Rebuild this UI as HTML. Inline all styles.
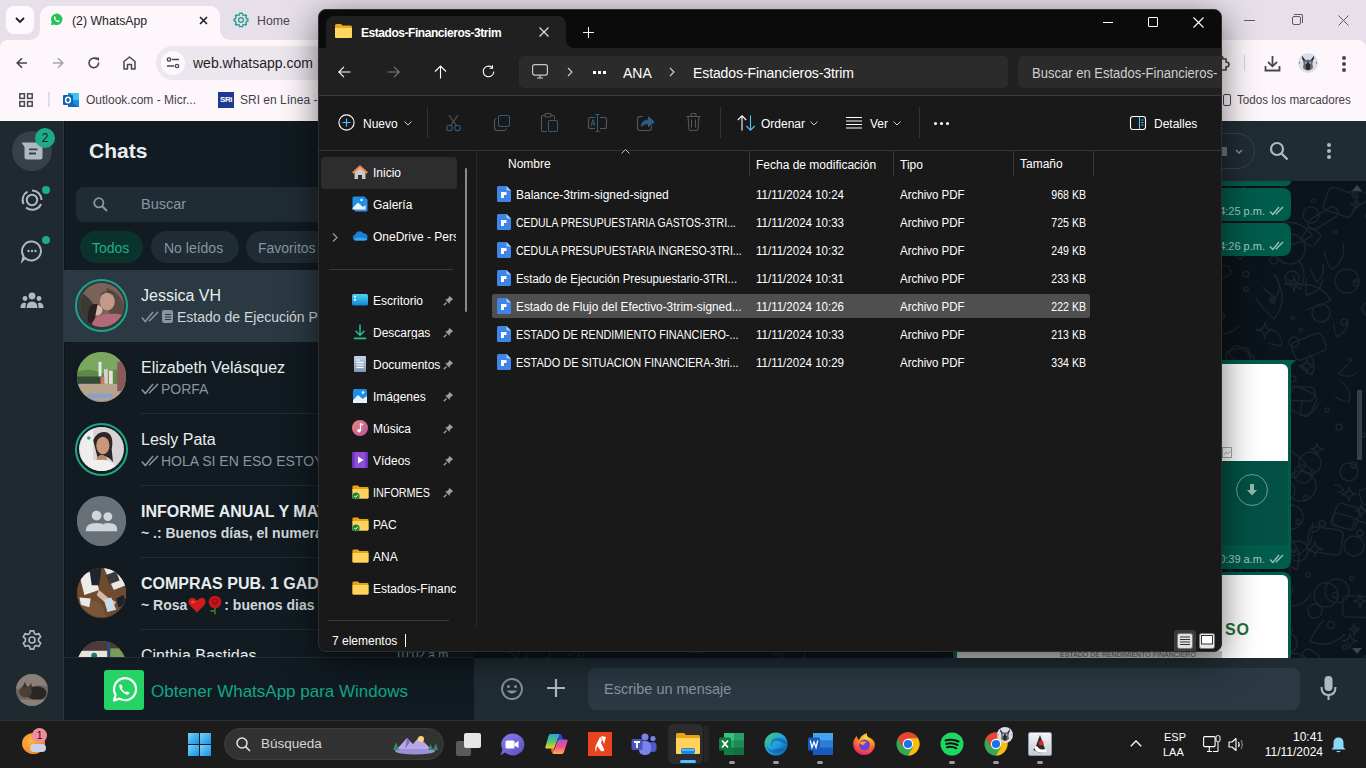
<!DOCTYPE html>
<html><head><meta charset="utf-8">
<style>
*{margin:0;padding:0;box-sizing:border-box}
html,body{width:1366px;height:768px;overflow:hidden;background:#111b21;font-family:"Liberation Sans",sans-serif}
.a{position:absolute}
.t{position:absolute;white-space:nowrap;line-height:1}
svg{position:absolute;overflow:visible}
</style></head><body>

<!-- ============ CHROME TOP ============ -->
<div class="a" id="chrome" style="left:0;top:0;width:1366px;height:121px;background:#e7e0eb">
  <!-- tab strip -->
  <div class="a" style="left:40px;top:6px;width:180px;height:40px;border-radius:10px 10px 0 0;background:#fdf7fc"></div>
  <div class="a" style="left:30px;top:30px;width:10px;height:10px;background:#fdf7fc"></div>
  <div class="a" style="left:30px;top:30px;width:10px;height:10px;border-radius:0 0 10px 0;background:#e7e0eb"></div>
  <div class="a" style="left:220px;top:30px;width:10px;height:10px;background:#fdf7fc"></div>
  <div class="a" style="left:220px;top:30px;width:10px;height:10px;border-radius:0 0 0 10px;background:#e7e0eb"></div>
  <div class="a" style="left:6px;top:6px;width:28px;height:28px;border-radius:8px;background:#fdf8fd"></div>
  <svg style="left:14px;top:15px" width="12" height="10"><path d="M2 3 L6 7 L10 3" stroke="#1f1f1f" stroke-width="1.8" fill="none"/></svg>
  <!-- whatsapp favicon -->
  <svg style="left:50px;top:13px" width="13" height="13" viewBox="0 0 24 24"><path d="M1.5 22.5 L3 16.8 A10.6 10.6 0 1 1 7.2 21 Z" fill="#25c15a"/><path d="M8.3 6.2 Q6.6 7.5 7.4 10.2 Q9 14.5 13.6 16.6 Q16.6 17.6 17.6 15.6 L17.4 14.5 L15 13.3 L14 14.5 Q11.2 13.4 9.6 10.6 L10.6 9.2 L9.6 6.4 Z" fill="#fff"/></svg>
  <div class="t" style="left:72px;top:15px;font-size:12.3px;color:#1f1f1f">(2) WhatsApp</div>
  <svg style="left:199px;top:16px" width="9" height="9"><path d="M1 1 L8 8 M8 1 L1 8" stroke="#1f1f1f" stroke-width="1.6"/></svg>
  <!-- Home tab gear -->
  <svg style="left:233px;top:12px" width="16" height="16" viewBox="0 0 16 16"><path d="M8 1.2 L9.4 1.4 L9.8 3 L11.2 3.6 L12.6 2.8 L13.6 3.8 L12.9 5.2 L13.4 6.6 L14.9 7 L14.9 9 L13.4 9.4 L12.9 10.8 L13.6 12.2 L12.6 13.2 L11.2 12.5 L9.8 13 L9.4 14.6 L6.6 14.6 L6.2 13 L4.8 12.5 L3.4 13.2 L2.4 12.2 L3.1 10.8 L2.6 9.4 L1.1 9 L1.1 7 L2.6 6.6 L3.1 5.2 L2.4 3.8 L3.4 2.8 L4.8 3.6 L6.2 3 L6.6 1.4 Z" fill="none" stroke="#1b9c8c" stroke-width="1.3"/><circle cx="8" cy="8" r="2.4" fill="none" stroke="#1b9c8c" stroke-width="1.2"/></svg>
  <div class="t" style="left:257px;top:15px;font-size:12.3px;color:#4a4650">Home</div>
  <!-- window controls -->
  <div class="a" style="left:1244px;top:20px;width:11px;height:1px;background:#5d5a63"></div>
  <div class="a" style="left:1292px;top:16px;width:9px;height:9px;border:1px solid #5d5a63;border-radius:2px"></div>
  <div class="a" style="left:1294px;top:14px;width:9px;height:9px;border-top:1px solid #5d5a63;border-right:1px solid #5d5a63;border-radius:0 2px 0 0"></div>
  <svg style="left:1338px;top:15px" width="11" height="11"><path d="M0.5 0.5 L10.5 10.5 M10.5 0.5 L0.5 10.5" stroke="#5d5a63" stroke-width="1"/></svg>

  <!-- toolbar -->
  <div class="a" style="left:0;top:40px;width:1366px;height:81px;border-radius:8px 8px 0 0;background:#fdf7fc"></div>
  <svg style="left:16px;top:57px" width="12" height="12"><path d="M11 6 H1.5 M6 1.2 L1.2 6 L6 10.8" stroke="#474551" stroke-width="1.6" fill="none"/></svg>
  <svg style="left:52px;top:57px" width="12" height="12"><path d="M1 6 H10.5 M6 1.2 L10.8 6 L6 10.8" stroke="#a9a6ae" stroke-width="1.6" fill="none"/></svg>
  <svg style="left:88px;top:57px" width="12" height="12"><path d="M10.6 5.5 A4.8 4.8 0 1 1 9 2.3" stroke="#474551" stroke-width="1.6" fill="none"/><path d="M7.2 0.6 L11 0.6 L11 4.2 Z" fill="#474551"/></svg>
  <svg style="left:123px;top:56px" width="13" height="14"><path d="M1 13 V5.5 L6.5 1 L12 5.5 V13 H8.5 V8.5 H4.5 V13 Z" stroke="#474551" stroke-width="1.5" fill="none" stroke-linejoin="round"/></svg>
  <div class="a" style="left:156px;top:46px;width:1054px;height:34px;border-radius:17px;background:#ece6ee"></div>
  <div class="a" style="left:161px;top:51px;width:24px;height:24px;border-radius:12px;background:#fdf8fd"></div>
  <svg style="left:166px;top:57px" width="14" height="12"><circle cx="3" cy="2.5" r="1.7" stroke="#474551" stroke-width="1.3" fill="none"/><path d="M6 2.5 H13 M1 9 H8" stroke="#474551" stroke-width="1.3"/><circle cx="11" cy="9" r="1.7" stroke="#474551" stroke-width="1.3" fill="none"/></svg>
  <div class="t" style="left:193px;top:56px;font-size:14px;color:#1f1f1f">web.whatsapp.com</div>
  <!-- right toolbar -->
  <svg style="left:1212px;top:54px" width="18" height="18" viewBox="0 0 18 18"><path d="M2 5 H6 Q6 2 8.5 2 Q11 2 11 5 H14 V8 Q17 8 17 10.5 Q17 13 14 13 V16 H2 Z" stroke="#474551" stroke-width="1.6" fill="none"/></svg>
  <div class="a" style="left:1244px;top:55px;width:1px;height:16px;background:#d9cdf0"></div>
  <svg style="left:1264px;top:55px" width="17" height="17"><path d="M8.5 1 V11 M4 7 L8.5 11.3 L13 7" stroke="#474551" stroke-width="1.8" fill="none"/><path d="M1.5 11 V15.5 H15.5 V11" stroke="#474551" stroke-width="1.8" fill="none"/></svg>
  <svg style="left:1298px;top:53px" width="20" height="20" viewBox="0 0 100 100"><defs><clipPath id="pug1"><circle cx="50" cy="50" r="50"/></clipPath></defs><g clip-path="url(#pug1)"><rect width="100" height="100" fill="#dcdce4"/><path d="M20 15 L42 40 L30 55Z M80 15 L58 40 L70 55Z" fill="#1f3f8f"/><path d="M18 12 L30 30 L24 35Z M82 12 L70 30 L76 35Z" fill="#111"/><path d="M30 40 Q50 25 70 40 L75 75 Q50 100 25 75Z" fill="#6a6a70"/><path d="M38 50 Q50 42 62 50 L60 80 Q50 90 40 80Z" fill="#2a2a30"/><circle cx="40" cy="50" r="4" fill="#eee"/><circle cx="60" cy="50" r="4" fill="#eee"/><rect x="5" y="45" width="4" height="8" fill="#c04040"/><rect x="91" y="45" width="4" height="8" fill="#c04040"/></g></svg>
  <div class="a" style="left:1342px;top:56px;width:4px;height:4px;border-radius:2px;background:#474551"></div>
  <div class="a" style="left:1342px;top:62px;width:4px;height:4px;border-radius:2px;background:#474551"></div>
  <div class="a" style="left:1342px;top:68px;width:4px;height:4px;border-radius:2px;background:#474551"></div>

  <!-- bookmarks -->
  <svg style="left:19px;top:93px" width="14" height="14"><rect x="0.8" y="0.8" width="4.6" height="4.6" stroke="#474551" stroke-width="1.5" fill="none"/><rect x="8.6" y="0.8" width="4.6" height="4.6" stroke="#474551" stroke-width="1.5" fill="none"/><rect x="0.8" y="8.6" width="4.6" height="4.6" stroke="#474551" stroke-width="1.5" fill="none"/><rect x="8.6" y="8.6" width="4.6" height="4.6" stroke="#474551" stroke-width="1.5" fill="none"/></svg>
  <div class="a" style="left:48px;top:92px;width:2px;height:15px;background:#e3d8f5"></div>
  <svg style="left:63px;top:92px" width="17" height="16"><rect x="5" y="1" width="11" height="14" fill="#1490df"/><rect x="8" y="1" width="8" height="7" fill="#50d9ff" opacity=".7"/><path d="M5 8 L16 15 H5 Z" fill="#0a6bbd"/><rect x="0" y="3" width="10" height="10" rx="1" fill="#0f5fb3"/><ellipse cx="5" cy="8" rx="2.4" ry="2.8" stroke="#fff" stroke-width="1.5" fill="none"/></svg>
  <div class="t" style="left:86px;top:94px;font-size:12px;color:#43404a">Outlook.com - Micr...</div>
  <div class="a" style="left:218px;top:92px;width:16px;height:16px;background:#1e3a8e"></div>
  <div class="t" style="left:218px;top:96px;width:16px;text-align:center;font-size:8px;font-weight:bold;color:#fff;letter-spacing:-0.5px">SRi</div>
  <div class="t" style="left:240px;top:94px;font-size:12px;color:#43404a">SRI en Línea - I</div>
  <div class="a" style="left:1223px;top:94px;width:8px;height:12px;border:1.5px solid #474551;border-radius:2px"></div>
  <div class="t" style="left:1237px;top:94px;font-size:12px;color:#43404a;transform:scaleX(0.97);transform-origin:0 0">Todos los marcadores</div>
</div>

<!-- ============ WHATSAPP ============ -->
<div class="a" id="wa" style="left:0;top:121px;width:1366px;height:599px;background:#0b141a;overflow:hidden">
 <div class="a" style="left:0;top:-121px;width:1366px;height:599px">
  <!-- nav rail -->
  <div class="a" style="left:0;top:121px;width:64px;height:599px;background:#1f2a30;border-right:1px solid #2b363d"></div>
  <div class="a" style="left:12px;top:131px;width:40px;height:40px;border-radius:50%;background:#374147"></div>
  <svg style="left:21px;top:142px" width="22" height="18" viewBox="0 0 22 18"><path d="M0.5 0.5 H21 Q21.5 0.5 21.5 1 V15 Q21.5 17.5 19 17.5 H6 Q3.5 17.5 3.5 15 V5 Z" fill="#aebac1"/><path d="M8 7.3 H16.5 M8 11.5 H15" stroke="#374147" stroke-width="1.8"/></svg>
  <div class="a" style="left:35px;top:128px;width:20px;height:20px;border-radius:50%;background:#1daa87"></div>
  <div class="t" style="left:35px;top:132px;width:20px;text-align:center;font-size:12px;color:#111b21">2</div>
  <svg style="left:20px;top:188px" width="24" height="24" viewBox="0 0 24 24"><circle cx="12" cy="12" r="5.2" stroke="#aebac1" stroke-width="2" fill="none"/><path d="M12 2.5 A9.5 9.5 0 0 1 21.5 12 M21 16 A9.5 9.5 0 0 1 6 19.5 M3.5 16 A9.5 9.5 0 0 1 7.5 3.6" stroke="#aebac1" stroke-width="2" fill="none"/></svg>
  <div class="a" style="left:42px;top:186px;width:8px;height:8px;border-radius:50%;background:#1daa87"></div>
  <svg style="left:20px;top:239px" width="24" height="24" viewBox="0 0 24 24"><path d="M12 2.5 A9.5 9.5 0 1 1 5 19 L2.5 21.5 L3.5 17 A9.5 9.5 0 0 1 12 2.5 Z" stroke="#aebac1" stroke-width="2" fill="none"/><circle cx="8.5" cy="12" r="1.2" fill="#aebac1"/><circle cx="12" cy="12" r="1.2" fill="#aebac1"/><circle cx="15.5" cy="12" r="1.2" fill="#aebac1"/></svg>
  <div class="a" style="left:42px;top:236px;width:8px;height:8px;border-radius:50%;background:#1daa87"></div>
  <svg style="left:20px;top:290px" width="24" height="22" viewBox="0 0 24 22"><circle cx="12" cy="6" r="3.4" fill="#aebac1"/><circle cx="5" cy="8.5" r="2.4" fill="#aebac1"/><circle cx="19" cy="8.5" r="2.4" fill="#aebac1"/><path d="M6.5 18 Q6.5 11.5 12 11.5 Q17.5 11.5 17.5 18 Z" fill="#aebac1"/><path d="M0.5 18 Q0.5 12.8 4.5 12.8 Q5.8 12.8 6.2 13.2 Q5.3 15 5.3 18 Z M23.5 18 Q23.5 12.8 19.5 12.8 Q18.2 12.8 17.8 13.2 Q18.7 15 18.7 18 Z" fill="#aebac1"/></svg>
  <svg style="left:21px;top:629px" width="22" height="22" viewBox="0 0 24 24"><path d="M10 2 H14 L14.6 5 L16.6 6.1 L19.5 5 L21.5 8.5 L19.2 10.5 V13.5 L21.5 15.5 L19.5 19 L16.6 17.9 L14.6 19 L14 22 H10 L9.4 19 L7.4 17.9 L4.5 19 L2.5 15.5 L4.8 13.5 V10.5 L2.5 8.5 L4.5 5 L7.4 6.1 L9.4 5 Z" stroke="#aebac1" stroke-width="1.8" fill="none" stroke-linejoin="round"/><circle cx="12" cy="12" r="3.3" stroke="#aebac1" stroke-width="1.8" fill="none"/></svg>
  <svg style="left:16px;top:674px" width="32" height="32" viewBox="0 0 100 100"><defs><clipPath id="c7"><circle cx="50" cy="50" r="50"/></clipPath></defs><g clip-path="url(#c7)"><rect width="100" height="100" fill="#6e6460"/><path d="M0 0 H100 V40 Q60 30 30 45 Q10 50 0 45Z" fill="#8a7e78"/><ellipse cx="65" cy="60" rx="30" ry="22" fill="#2a2624"/><ellipse cx="30" cy="55" rx="20" ry="18" fill="#4a4038"/><path d="M20 40 L28 25 L35 42Z M40 40 L48 28 L50 45Z" fill="#3a3430"/><rect x="0" y="80" width="100" height="20" fill="#8a8078"/></g></svg>

  <!-- chat list -->
  <div class="a" style="left:65px;top:121px;width:409px;height:599px;background:#111b21"></div>
  <div class="t" style="left:89px;top:140px;font-size:21px;font-weight:bold;color:#e9edef">Chats</div>
  <div class="a" style="left:76px;top:187px;width:398px;height:35px;border-radius:8px;background:#202c33"></div>
  <svg style="left:93px;top:197px" width="15" height="15" viewBox="0 0 15 15"><circle cx="5.8" cy="5.8" r="4.6" stroke="#8696a0" stroke-width="1.8" fill="none"/><path d="M9.2 9.2 L14 14" stroke="#8696a0" stroke-width="2"/></svg>
  <div class="t" style="left:141px;top:197px;font-size:14.5px;color:#8696a0">Buscar</div>
  <div class="a" style="left:80px;top:231px;width:63px;height:32px;border-radius:16px;background:#0a332c"></div>
  <div class="t" style="left:92px;top:241px;font-size:14px;color:#1fae85">Todos</div>
  <div class="a" style="left:151px;top:231px;width:88px;height:32px;border-radius:16px;background:#202c33"></div>
  <div class="t" style="left:164px;top:241px;font-size:14px;color:#8696a0">No leídos</div>
  <div class="a" style="left:246px;top:231px;width:84px;height:32px;border-radius:16px;background:#202c33"></div>
  <div class="t" style="left:258px;top:241px;font-size:14px;color:#8696a0">Favoritos</div>
<div class="a" style="left:64px;top:270px;width:410px;height:72px;background:#2a3942"></div>
<div class="a" style="left:74.5px;top:278.5px;width:53px;height:53px;border-radius:50%;border:2px solid #1fa586"></div>
<div class="a" style="left:79px;top:283px;width:44px;height:44px;border-radius:50%;background:radial-gradient(circle at 60% 35%,#c9a39a 0,#a0706a 25%,#5b4642 55%,#3a3532 80%)"></div>
<div class="t" style="left:141px;top:288px;font-size:16px;font-weight:normal;color:#e9edef">Jessica VH</div>
<svg style="left:141px;top:-1px;margin-top:312px" width="18" height="12" viewBox="0 0 18 12"><path d="M0.8 6.5 L4.3 10.5 L12 1 M8 10.3 L17 1" stroke="#8696a0" stroke-width="1.5" fill="none"/></svg>
<div class="a" style="left:162px;top:310px;width:11px;height:13px;border-radius:2px;background:#8696a0"></div>
<div class="a" style="left:164.5px;top:314px;width:6px;height:1.2px;background:#2a3942;box-shadow:0 2.5px 0 #2a3942,0 5px 0 #2a3942"></div>
<div class="t" style="left:177px;top:310px;font-size:14px;font-weight:normal;color:#d1d7db">Estado de Ejecución Presupuestario</div>
<div class="a" style="left:76.5px;top:352.5px;width:49px;height:49px;border-radius:50%;background:linear-gradient(180deg,#5f8a4a 0,#3f6a35 45%,#6d6a5d 60%,#c9b7a3 85%,#9a8e80 100%)"></div>
<div class="t" style="left:141px;top:360px;font-size:16px;font-weight:normal;color:#e9edef">Elizabeth Velásquez</div>
<svg style="left:141px;top:-1px;margin-top:384px" width="18" height="12" viewBox="0 0 18 12"><path d="M0.8 6.5 L4.3 10.5 L12 1 M8 10.3 L17 1" stroke="#8696a0" stroke-width="1.5" fill="none"/></svg>
<div class="t" style="left:161px;top:382px;font-size:14px;font-weight:normal;color:#8696a0">PORFA</div>
<div class="a" style="left:141px;top:413px;width:333px;height:1px;background:#222d34"></div>
<div class="a" style="left:74.5px;top:422.5px;width:53px;height:53px;border-radius:50%;border:2px solid #1fa586"></div>
<div class="a" style="left:79px;top:427px;width:44px;height:44px;border-radius:50%;background:radial-gradient(circle at 50% 45%,#b08770 0,#8c6e60 18%,#d8d4d2 45%,#ecebea 70%,#c8c4c4 100%)"></div>
<div class="t" style="left:141px;top:432px;font-size:16px;font-weight:normal;color:#e9edef">Lesly Pata</div>
<svg style="left:141px;top:-1px;margin-top:456px" width="18" height="12" viewBox="0 0 18 12"><path d="M0.8 6.5 L4.3 10.5 L12 1 M8 10.3 L17 1" stroke="#8696a0" stroke-width="1.5" fill="none"/></svg>
<div class="t" style="left:161px;top:454px;font-size:14px;font-weight:normal;color:#8696a0">HOLA SI EN ESO ESTOY TRABAJANDO</div>
<div class="a" style="left:141px;top:485px;width:333px;height:1px;background:#222d34"></div>
<div class="a" style="left:76.5px;top:496.5px;width:49px;height:49px;border-radius:50%;background:#687177"></div>
<div class="t" style="left:141px;top:504px;font-size:16px;font-weight:bold;color:#e9edef">INFORME ANUAL Y MATRIZ</div>
<div class="t" style="left:141px;top:526px;font-size:14px;font-weight:bold;color:#d1d7db">~ .: Buenos días, el numeral</div>
<div class="a" style="left:141px;top:557px;width:333px;height:1px;background:#222d34"></div>
<div class="a" style="left:76.5px;top:568.5px;width:49px;height:49px;border-radius:50%;background:radial-gradient(circle at 60% 40%,#e8e6e2 0,#b4a696 30%,#6a4a30 60%,#4a3422 100%)"></div>
<div class="t" style="left:141px;top:576px;font-size:16px;font-weight:bold;color:#e9edef">COMPRAS PUB. 1 GAD</div>
<div class="t" style="left:141px;top:598px;font-size:14px;font-weight:bold;color:#d1d7db">~ Rosa<span style="display:inline-block;width:37px"></span>: buenos dias p</div>
<div class="a" style="left:141px;top:629px;width:333px;height:1px;background:#222d34"></div>
<div class="a" style="left:76.5px;top:640.5px;width:49px;height:49px;border-radius:50%;background:linear-gradient(90deg,#8a6a3a 0,#c8a050 40%,#6a8a50 60%,#3a5a3a 100%)"></div>
<div class="t" style="left:141px;top:648px;font-size:16px;font-weight:normal;color:#e9edef">Cinthia Bastidas</div>
<div class="t" style="left:141px;top:670px;font-size:14px;font-weight:normal;color:#8696a0"></div>


  <svg style="left:79.5px;top:282.5px" width="44" height="44" viewBox="0 0 100 100"><defs><clipPath id="c1"><circle cx="50" cy="50" r="50"/></clipPath></defs><g clip-path="url(#c1)"><rect width="100" height="100" fill="#7a625a"/><path d="M0 20 Q20 30 35 55 L30 100 H0Z" fill="#3b3a32"/><path d="M60 10 Q90 20 100 50 V100 H70Z" fill="#5a4a42"/><ellipse cx="62" cy="42" rx="17" ry="20" fill="#c29a8a"/><path d="M45 30 Q60 10 80 28 Q75 20 62 18 Q48 20 45 30Z" fill="#2a221e"/><ellipse cx="38" cy="62" rx="13" ry="12" fill="#d8b4ac"/><path d="M20 60 Q25 45 40 48 L30 100 H15Z" fill="#2a2020"/><path d="M25 100 Q30 75 50 72 Q70 68 100 72 V100Z" fill="#b06a7a"/></g></svg>
  <svg style="left:77.0px;top:352.0px" width="49.0" height="49.0" viewBox="0 0 100 100"><defs><clipPath id="c2"><circle cx="50" cy="50" r="50"/></clipPath></defs><g clip-path="url(#c2)"><rect width="100" height="100" fill="#5d8a48"/><path d="M0 0 H100 V40 Q70 30 50 45 Q30 30 0 40Z" fill="#7aa860"/><rect x="44" y="20" width="6" height="35" fill="#e0ecef"/><rect x="0" y="50" width="60" height="15" fill="#3a4a38"/><rect x="55" y="35" width="8" height="30" fill="#d8d0cc"/><rect x="65" y="38" width="8" height="30" fill="#e8e0d8"/><rect x="48" y="50" width="8" height="20" fill="#c87a5a"/><rect x="0" y="65" width="100" height="35" fill="#b8a48a"/><path d="M20 85 H75 L70 95 H25Z" fill="#8aa0c8"/><rect x="82" y="20" width="18" height="60" fill="#8a5a5a"/></g></svg>
  <svg style="left:79.5px;top:426.5px" width="44" height="44" viewBox="0 0 100 100"><defs><clipPath id="c3"><circle cx="50" cy="50" r="50"/></clipPath></defs><g clip-path="url(#c3)"><rect width="100" height="100" fill="#d8d4d4"/><rect x="0" y="0" width="30" height="100" fill="#eeeeee"/><path d="M30 30 Q40 8 60 12 Q78 18 72 50 L75 80 Q60 60 40 70 Z" fill="#2e2624"/><ellipse cx="52" cy="42" rx="15" ry="20" fill="#c8987c"/><path d="M38 70 Q50 55 62 72 L58 82 Q48 78 38 82Z" fill="#b8866a"/><path d="M10 100 Q20 70 45 75 Q70 70 90 100Z" fill="#f2f0ee"/><circle cx="20" cy="25" r="4" fill="#2aa090"/></g></svg>
  <svg style="left:77.0px;top:496.0px" width="49.0" height="49.0" viewBox="0 0 100 100"><defs><clipPath id="c4"><circle cx="50" cy="50" r="50"/></clipPath></defs><g clip-path="url(#c4)"><rect width="100" height="100" fill="#687177"/><circle cx="40" cy="40" r="10" fill="#d0d6d9"/><circle cx="63" cy="42" r="9" fill="#d0d6d9"/><path d="M18 70 Q18 55 40 55 Q62 55 62 70 V72 H18Z" fill="#d0d6d9"/><path d="M58 72 V66 Q58 58 54 56 Q58 55 64 55 Q82 55 82 68 V72Z" fill="#d0d6d9"/></g></svg>
  <svg style="left:77.0px;top:568.0px" width="49.0" height="49.0" viewBox="0 0 100 100"><defs><clipPath id="c5"><circle cx="50" cy="50" r="50"/></clipPath></defs><g clip-path="url(#c5)"><rect width="100" height="100" fill="#6e4a2e"/><path d="M0 70 Q30 60 50 75 L60 100 H0Z" fill="#7a5638"/><path d="M55 0 H95 L100 35 L75 45 Z" fill="#e8e8e4"/><rect x="62" y="10" width="22" height="20" fill="#3a3a3a" transform="rotate(-20 73 20)"/><path d="M5 15 L35 5 L45 45 L15 55Z" fill="#ecebe8"/><path d="M25 0 L50 0 L45 35 L30 35Z" fill="#1e2430"/><path d="M45 45 Q60 60 80 70 L72 80 Q55 70 40 55Z" fill="#d8b8a0"/><path d="M80 62 L95 55 L100 75 L85 80Z" fill="#1a2030"/><path d="M55 65 L70 60 L80 85 L62 90Z" fill="#c8dce8"/><path d="M5 60 L28 62 L25 80 L8 75Z" fill="#e8e8e8"/></g></svg>
  <svg style="left:77.0px;top:640.5px" width="49.0" height="49.0" viewBox="0 0 100 100"><defs><clipPath id="c6"><circle cx="50" cy="50" r="50"/></clipPath></defs><g clip-path="url(#c6)"><rect width="100" height="100" fill="#6a5a3a"/><rect x="0" y="0" width="100" height="20" fill="#4a3a3a"/><rect x="0" y="20" width="62" height="22" fill="#e8e4dc"/><circle cx="35" cy="30" r="6" fill="#1a7a6a"/><rect x="0" y="42" width="62" height="58" fill="#b8683a"/><rect x="62" y="0" width="6" height="100" fill="#2a4a7a"/><rect x="68" y="15" width="32" height="85" fill="#7a9a5a"/><circle cx="15" cy="50" r="8" fill="#e8c030"/></g></svg>
<svg style="left:188px;top:597px" width="18" height="16" viewBox="0 0 18 16"><path d="M9 15.5 L2 8.5 Q-1 5 1.5 2 Q5 -1 9 3.5 Q13 -1 16.5 2 Q19 5 16 8.5 Z" fill="#d01c1c"/><ellipse cx="5" cy="5" rx="2" ry="1.2" fill="#f07070" opacity=".6"/></svg><svg style="left:207px;top:595px" width="16" height="20" viewBox="0 0 16 20"><path d="M8 12 V19.5" stroke="#3a8a2a" stroke-width="1.4"/><path d="M8 16 Q4 14 3 16 Q6 18 8 16Z" fill="#3a8a2a"/><circle cx="8" cy="7" r="6.3" fill="#c8151b"/><path d="M4.5 6 Q8 2 11.5 6 Q8 9.5 4.5 6Z M6 8.5 Q8 11 10 8.5" stroke="#7a0a0e" stroke-width="0.9" fill="none"/></svg>
  <div class="t" style="left:395px;top:649px;font-size:12px;color:#8696a0">10:02 a.m.</div>
  <!-- banner -->
  <div class="a" style="left:64px;top:657px;width:410px;height:63px;background:#111b21;border-top:1px solid #222d34"></div>
  <div class="a" style="left:104px;top:670px;width:40px;height:40px;border-radius:3px;background:#25d366"></div>
  <svg style="left:110px;top:676px" width="28" height="28" viewBox="0 0 28 28"><path d="M4 24.5 L5.6 18.8 A11 11 0 1 1 9.4 22.6 Z" stroke="#fff" stroke-width="2.2" fill="none" stroke-linejoin="round"/><path d="M10 8.2 Q8.6 9.6 9.8 12.4 Q11.8 16.6 16 18.4 Q18.4 19.2 19.4 17.6 L19 16.2 L16.8 15.2 L15.8 16.3 Q13.2 15.2 11.8 12.4 L12.6 11.3 L11.8 9 Z" fill="#fff"/></svg>
  <div class="t" style="left:151px;top:683px;font-size:17px;color:#12a689">Obtener WhatsApp para Windows</div>

  <!-- chat area -->
  <div class="a" id="wall" style="left:474px;top:181px;width:892px;height:477px;background:#0b141a"></div>
  <svg style="left:474px;top:181px" width="892" height="477" viewBox="474 181 892 477"><g fill="none" stroke="#1a252c" stroke-width="1.5"><path d="M878 448 q13 -9 27 0 q-7 9 -13 13" transform="rotate(91 878 448)"/><rect x="998" y="269" width="26" height="24" rx="5" transform="rotate(-32 998 269)"/><path d="M745 224 q16 -11 32 0 q-8 11 -16 16" transform="rotate(8 745 224)"/><path d="M1350 633 Q1350 641 1358 641 Q1350 641 1350 649 Q1350 641 1342 641 Q1350 641 1350 633Z"/><rect x="614" y="188" width="13" height="13" rx="5" transform="rotate(-21 614 188)"/><circle cx="501" cy="402" r="3.2" /><rect x="937" y="486" width="27" height="18" rx="5" transform="rotate(-18 937 486)"/><path d="M1364 656 q16 -11 33 0 q-8 11 -16 16" transform="rotate(57 1364 656)"/><circle cx="679" cy="319" r="13" /><circle cx="831" cy="585" r="3.4" /><circle cx="1230" cy="181" r="15" /><circle cx="893" cy="649" r="1.6" /><circle cx="1035" cy="552" r="1.7" /><path d="M771 641 q9 -6 18 0 q-4 6 -9 9" transform="rotate(44 771 641)"/><path d="M564 210 q10 -6 19 0 q-5 6 -10 10" transform="rotate(101 564 210)"/><path d="M873 266 Q873 272 879 272 Q873 272 873 278 Q873 272 867 272 Q873 272 873 266Z"/><circle cx="1048" cy="237" r="1.9" /><path d="M715 644 q11 -8 23 0 q-6 8 -11 11" transform="rotate(159 715 644)"/><path d="M662 369 q16 -10 31 0 q-8 10 -16 16" transform="rotate(18 662 369)"/><circle cx="1356" cy="283" r="3.0" /><circle cx="767" cy="322" r="5" /><rect x="994" y="297" width="20" height="18" rx="5" transform="rotate(37 994 297)"/><path d="M905 455 q10 -7 20 0 q-5 7 -10 10" transform="rotate(28 905 455)"/><circle cx="1284" cy="571" r="6" /><circle cx="1134" cy="630" r="15" /><circle cx="1261" cy="469" r="1.7" /><circle cx="509" cy="640" r="12" /><rect x="703" y="574" width="18" height="13" rx="5" transform="rotate(18 703 574)"/><rect x="535" y="290" width="31" height="21" rx="5" transform="rotate(-18 535 290)"/><circle cx="1292" cy="278" r="7" /><circle cx="872" cy="210" r="8" /><circle cx="984" cy="244" r="3.3" /><path d="M1349 486 Q1349 494 1357 494 Q1349 494 1349 502 Q1349 494 1341 494 Q1349 494 1349 486Z"/><circle cx="599" cy="198" r="15" /><circle cx="1099" cy="640" r="12" /><circle cx="904" cy="529" r="3.5" /><path d="M541 432 Q541 441 551 441 Q541 441 541 451 Q541 441 532 441 Q541 441 541 432Z"/><path d="M1131 517 q19 -13 38 0 q-9 13 -19 19" transform="rotate(63 1131 517)"/><path d="M1085 611 q13 -8 25 0 q-6 8 -13 13" transform="rotate(142 1085 611)"/><path d="M1244 447 Q1244 454 1251 454 Q1244 454 1244 461 Q1244 454 1237 454 Q1244 454 1244 447Z"/><circle cx="994" cy="471" r="12" /><path d="M1360 594 Q1360 601 1367 601 Q1360 601 1360 608 Q1360 601 1353 601 Q1360 601 1360 594Z"/><circle cx="1130" cy="458" r="3.2" /><circle cx="549" cy="539" r="11" /><path d="M903 283 Q903 291 910 291 Q903 291 903 298 Q903 291 896 291 Q903 291 903 283Z"/><circle cx="1022" cy="620" r="1.5" /><circle cx="743" cy="504" r="6" /><circle cx="1282" cy="496" r="3.3" /><circle cx="766" cy="499" r="9" /><path d="M1193 617 q12 -8 25 0 q-6 8 -12 12" transform="rotate(105 1193 617)"/><rect x="756" y="246" width="30" height="25" rx="5" transform="rotate(17 756 246)"/><circle cx="1321" cy="313" r="9" /><circle cx="719" cy="283" r="2.8" /><path d="M915 331 q20 -13 40 0 q-10 13 -20 20" transform="rotate(81 915 331)"/><path d="M541 196 q8 -5 16 0 q-4 5 -8 8" transform="rotate(128 541 196)"/><path d="M983 328 q8 -5 15 0 q-4 5 -8 8" transform="rotate(24 983 328)"/><path d="M880 193 q10 -7 21 0 q-5 7 -10 10" transform="rotate(25 880 193)"/><circle cx="516" cy="481" r="2.8" /><path d="M1058 566 q16 -11 32 0 q-8 11 -16 16" transform="rotate(36 1058 566)"/><circle cx="898" cy="266" r="10" /><circle cx="1111" cy="266" r="2.2" /><rect x="1096" y="429" width="29" height="17" rx="5" transform="rotate(23 1096 429)"/><path d="M1282 223 q17 -11 33 0 q-8 11 -17 17" transform="rotate(23 1282 223)"/><path d="M879 479 q12 -8 24 0 q-6 8 -12 12" transform="rotate(102 879 479)"/><path d="M1258 561 q13 -9 27 0 q-7 9 -13 13" transform="rotate(117 1258 561)"/><path d="M657 525 q16 -10 31 0 q-8 10 -16 16" transform="rotate(129 657 525)"/><path d="M664 610 q20 -13 39 0 q-10 13 -20 20" transform="rotate(97 664 610)"/><path d="M1179 334 q18 -12 36 0 q-9 12 -18 18" transform="rotate(63 1179 334)"/><rect x="548" y="391" width="29" height="19" rx="5" transform="rotate(-38 548 391)"/><path d="M1196 212 q10 -6 19 0 q-5 6 -10 10" transform="rotate(60 1196 212)"/><circle cx="1177" cy="248" r="10" /><path d="M1119 572 Q1119 582 1129 582 Q1119 582 1119 591 Q1119 582 1110 582 Q1119 582 1119 572Z"/><circle cx="913" cy="634" r="7" /><path d="M944 311 Q944 319 952 319 Q944 319 944 328 Q944 319 936 319 Q944 319 944 311Z"/><rect x="940" y="583" width="19" height="17" rx="5" transform="rotate(28 940 583)"/><path d="M1277 280 q20 -13 39 0 q-10 13 -20 20" transform="rotate(94 1277 280)"/><rect x="985" y="277" width="23" height="21" rx="5" transform="rotate(-38 985 277)"/><circle cx="1339" cy="427" r="3.1" /><path d="M976 410 Q976 415 981 415 Q976 415 976 421 Q976 415 971 415 Q976 415 976 410Z"/><path d="M955 378 q19 -13 38 0 q-10 13 -19 19" transform="rotate(48 955 378)"/><circle cx="896" cy="242" r="3.1" /><circle cx="1277" cy="408" r="1.9" /><circle cx="1025" cy="622" r="13" /><circle cx="494" cy="274" r="12" /><rect x="761" y="351" width="14" height="23" rx="5" transform="rotate(-30 761 351)"/><circle cx="929" cy="301" r="10" /><circle cx="864" cy="360" r="2.6" /><path d="M616 270 Q616 278 625 278 Q616 278 616 287 Q616 278 608 278 Q616 278 616 270Z"/><rect x="946" y="587" width="31" height="14" rx="5" transform="rotate(19 946 587)"/><circle cx="1197" cy="612" r="2.1" /><path d="M1297 285 q19 -12 37 0 q-9 12 -19 19" transform="rotate(24 1297 285)"/><circle cx="687" cy="528" r="1.7" /><path d="M1216 382 q9 -6 18 0 q-5 6 -9 9" transform="rotate(73 1216 382)"/><circle cx="1085" cy="189" r="12" /><circle cx="1287" cy="643" r="10" /><path d="M1150 415 Q1150 421 1156 421 Q1150 421 1150 427 Q1150 421 1144 421 Q1150 421 1150 415Z"/><circle cx="537" cy="232" r="11" /><circle cx="933" cy="452" r="6" /><path d="M656 582 q19 -13 38 0 q-10 13 -19 19" transform="rotate(17 656 582)"/><rect x="529" y="635" width="29" height="16" rx="5" transform="rotate(-3 529 635)"/><rect x="934" y="386" width="12" height="23" rx="5" transform="rotate(28 934 386)"/><path d="M636 391 Q636 398 643 398 Q636 398 636 405 Q636 398 629 398 Q636 398 636 391Z"/><rect x="648" y="260" width="12" height="26" rx="5" transform="rotate(24 648 260)"/><path d="M1103 585 Q1103 592 1110 592 Q1103 592 1103 599 Q1103 592 1096 592 Q1103 592 1103 585Z"/><path d="M1009 422 q18 -12 35 0 q-9 12 -18 18" transform="rotate(46 1009 422)"/><path d="M1287 536 q18 -12 35 0 q-9 12 -18 18" transform="rotate(73 1287 536)"/><path d="M1274 592 Q1274 601 1283 601 Q1274 601 1274 610 Q1274 601 1265 601 Q1274 601 1274 592Z"/><path d="M1157 369 Q1157 375 1162 375 Q1157 375 1157 380 Q1157 375 1151 375 Q1157 375 1157 369Z"/><circle cx="779" cy="405" r="8" /><circle cx="1044" cy="479" r="15" /><path d="M1068 334 Q1068 342 1076 342 Q1068 342 1068 350 Q1068 342 1060 342 Q1068 342 1068 334Z"/><path d="M950 367 q16 -10 31 0 q-8 10 -16 16" transform="rotate(126 950 367)"/><circle cx="1153" cy="649" r="11" /><circle cx="1133" cy="303" r="1.6" /><circle cx="648" cy="360" r="7" /><rect x="1282" y="443" width="33" height="20" rx="5" transform="rotate(40 1282 443)"/><circle cx="1043" cy="567" r="11" /><path d="M1151 203 q9 -6 19 0 q-5 6 -9 9" transform="rotate(85 1151 203)"/><rect x="625" y="417" width="13" height="27" rx="5" transform="rotate(-6 625 417)"/><circle cx="944" cy="466" r="2.1" /><circle cx="1058" cy="448" r="2.9" /><circle cx="738" cy="188" r="5" /><circle cx="614" cy="541" r="3.3" /><path d="M1142 205 q19 -13 39 0 q-10 13 -19 19" transform="rotate(13 1142 205)"/><rect x="1282" y="386" width="33" height="14" rx="5" transform="rotate(2 1282 386)"/><rect x="1310" y="526" width="34" height="25" rx="5" transform="rotate(8 1310 526)"/><rect x="577" y="479" width="16" height="11" rx="5" transform="rotate(2 577 479)"/><path d="M585 385 Q585 392 592 392 Q585 392 585 400 Q585 392 578 392 Q585 392 585 385Z"/><circle cx="708" cy="459" r="3.1" /><path d="M947 657 q17 -11 33 0 q-8 11 -17 17" transform="rotate(43 947 657)"/><path d="M576 607 q15 -10 31 0 q-8 10 -15 15" transform="rotate(65 576 607)"/><rect x="716" y="508" width="25" height="21" rx="5" transform="rotate(20 716 508)"/><path d="M643 300 q19 -13 38 0 q-9 13 -19 19" transform="rotate(158 643 300)"/><circle cx="509" cy="210" r="2.4" /><rect x="1030" y="230" width="14" height="12" rx="5" transform="rotate(14 1030 230)"/><circle cx="965" cy="482" r="2.5" /><path d="M662 336 Q662 345 671 345 Q662 345 662 354 Q662 345 653 345 Q662 345 662 336Z"/><path d="M540 238 q15 -10 31 0 q-8 10 -15 15" transform="rotate(138 540 238)"/><circle cx="664" cy="383" r="3.1" /><path d="M803 493 q12 -8 23 0 q-6 8 -12 12" transform="rotate(99 803 493)"/><circle cx="1140" cy="620" r="2.2" /><circle cx="561" cy="598" r="5" /><path d="M977 406 Q977 412 984 412 Q977 412 977 419 Q977 412 971 412 Q977 412 977 406Z"/><circle cx="1166" cy="217" r="12" /><path d="M547 317 Q547 326 555 326 Q547 326 547 334 Q547 326 538 326 Q547 326 547 317Z"/><circle cx="726" cy="249" r="3.0" /><path d="M801 229 Q801 237 809 237 Q801 237 801 245 Q801 237 793 237 Q801 237 801 229Z"/><path d="M1293 629 q13 -9 26 0 q-6 9 -13 13" transform="rotate(145 1293 629)"/><circle cx="746" cy="333" r="3.4" /><circle cx="1272" cy="299" r="2.2" /><circle cx="798" cy="370" r="1.9" /><rect x="977" y="561" width="30" height="20" rx="5" transform="rotate(-26 977 561)"/><circle cx="1151" cy="601" r="1.5" /><rect x="934" y="441" width="33" height="22" rx="5" transform="rotate(24 934 441)"/><path d="M531 442 q9 -6 17 0 q-4 6 -9 9" transform="rotate(15 531 442)"/><circle cx="1131" cy="610" r="12" /><path d="M602 531 Q602 537 609 537 Q602 537 602 543 Q602 537 596 537 Q602 537 602 531Z"/><rect x="671" y="546" width="29" height="17" rx="5" transform="rotate(-13 671 546)"/><rect x="1338" y="502" width="24" height="23" rx="5" transform="rotate(17 1338 502)"/><path d="M1290 377 q16 -11 32 0 q-8 11 -16 16" transform="rotate(154 1290 377)"/><path d="M1193 579 q19 -13 39 0 q-10 13 -19 19" transform="rotate(115 1193 579)"/><path d="M941 520 q13 -9 26 0 q-6 9 -13 13" transform="rotate(76 941 520)"/><path d="M604 535 q12 -8 24 0 q-6 8 -12 12" transform="rotate(30 604 535)"/><circle cx="656" cy="384" r="3.4" /><circle cx="527" cy="328" r="12" /><circle cx="1166" cy="267" r="10" /><circle cx="995" cy="615" r="5" /><circle cx="639" cy="285" r="13" /><circle cx="1005" cy="288" r="7" /><circle cx="628" cy="542" r="2.6" /><circle cx="1203" cy="410" r="3.3" /><rect x="1290" y="344" width="33" height="19" rx="5" transform="rotate(-22 1290 344)"/><path d="M518 633 q12 -8 25 0 q-6 8 -12 12" transform="rotate(95 518 633)"/><path d="M934 312 q16 -10 31 0 q-8 10 -16 16" transform="rotate(43 934 312)"/><circle cx="484" cy="406" r="3.1" /><circle cx="1110" cy="470" r="6" /><path d="M761 305 q14 -9 28 0 q-7 9 -14 14" transform="rotate(115 761 305)"/><rect x="1360" y="308" width="15" height="24" rx="5" transform="rotate(-40 1360 308)"/><path d="M1207 585 q9 -6 17 0 q-4 6 -9 9" transform="rotate(49 1207 585)"/><rect x="1113" y="227" width="22" height="27" rx="5" transform="rotate(7 1113 227)"/><path d="M1239 326 q13 -8 25 0 q-6 8 -13 13" transform="rotate(165 1239 326)"/><circle cx="555" cy="575" r="11" /><path d="M943 256 q11 -8 23 0 q-6 8 -11 11" transform="rotate(56 943 256)"/><rect x="542" y="327" width="28" height="16" rx="5" transform="rotate(15 542 327)"/><rect x="568" y="369" width="33" height="25" rx="5" transform="rotate(12 568 369)"/><path d="M485 355 Q485 361 491 361 Q485 361 485 367 Q485 361 479 361 Q485 361 485 355Z"/><circle cx="977" cy="400" r="16" /><rect x="1187" y="280" width="18" height="17" rx="5" transform="rotate(3 1187 280)"/><circle cx="740" cy="342" r="2.8" /><path d="M703 270 Q703 276 709 276 Q703 276 703 283 Q703 276 696 276 Q703 276 703 270Z"/><path d="M1317 443 Q1317 449 1324 449 Q1317 449 1317 456 Q1317 449 1310 449 Q1317 449 1317 443Z"/><circle cx="1212" cy="225" r="5" /><circle cx="1079" cy="519" r="9" /><circle cx="1221" cy="464" r="7" /><circle cx="614" cy="240" r="1.6" /><rect x="1295" y="385" width="26" height="24" rx="5" transform="rotate(26 1295 385)"/><circle cx="818" cy="339" r="1.5" /><path d="M831 515 q17 -12 35 0 q-9 12 -17 17" transform="rotate(119 831 515)"/><circle cx="1017" cy="190" r="2.2" /><circle cx="1054" cy="232" r="2.5" /><rect x="1177" y="575" width="15" height="24" rx="5" transform="rotate(32 1177 575)"/><rect x="963" y="349" width="15" height="23" rx="5" transform="rotate(39 963 349)"/><path d="M934 522 q10 -7 20 0 q-5 7 -10 10" transform="rotate(170 934 522)"/><circle cx="1033" cy="275" r="7" /><circle cx="988" cy="514" r="3.4" /><circle cx="796" cy="402" r="16" /><rect x="595" y="612" width="24" height="20" rx="5" transform="rotate(-19 595 612)"/><path d="M1285 654 q15 -10 30 0 q-8 10 -15 15" transform="rotate(22 1285 654)"/><path d="M1210 319 q11 -7 21 0 q-5 7 -11 11" transform="rotate(103 1210 319)"/><rect x="1215" y="270" width="14" height="11" rx="5" transform="rotate(-26 1215 270)"/><path d="M1354 623 Q1354 629 1361 629 Q1354 629 1354 636 Q1354 629 1348 629 Q1354 629 1354 623Z"/><circle cx="1073" cy="533" r="2.7" /><circle cx="1191" cy="189" r="10" /><rect x="602" y="365" width="16" height="19" rx="5" transform="rotate(-19 602 365)"/><path d="M981 334 Q981 339 986 339 Q981 339 981 345 Q981 339 975 339 Q981 339 981 334Z"/><path d="M1073 250 q15 -10 30 0 q-8 10 -15 15" transform="rotate(85 1073 250)"/><path d="M841 470 Q841 479 850 479 Q841 479 841 487 Q841 479 832 479 Q841 479 841 470Z"/><path d="M1145 413 q18 -12 36 0 q-9 12 -18 18" transform="rotate(154 1145 413)"/><rect x="839" y="388" width="32" height="19" rx="5" transform="rotate(2 839 388)"/><circle cx="860" cy="612" r="1.6" /><path d="M1121 602 Q1121 610 1129 610 Q1121 610 1121 618 Q1121 610 1113 610 Q1121 610 1121 602Z"/><rect x="1145" y="326" width="14" height="12" rx="5" transform="rotate(-4 1145 326)"/><circle cx="922" cy="370" r="12" /><circle cx="943" cy="295" r="2.3" /><path d="M684 214 q20 -13 39 0 q-10 13 -20 20" transform="rotate(120 684 214)"/><path d="M1247 382 q10 -7 21 0 q-5 7 -10 10" transform="rotate(134 1247 382)"/><circle cx="980" cy="612" r="14" /><path d="M584 437 q8 -5 15 0 q-4 5 -8 8" transform="rotate(44 584 437)"/><circle cx="741" cy="336" r="15" /><circle cx="1201" cy="370" r="2.7" /><path d="M515 196 q11 -8 23 0 q-6 8 -11 11" transform="rotate(90 515 196)"/><rect x="1307" y="647" width="17" height="15" rx="5" transform="rotate(34 1307 647)"/><path d="M1274 274 q12 -8 24 0 q-6 8 -12 12" transform="rotate(85 1274 274)"/><path d="M627 601 q10 -7 20 0 q-5 7 -10 10" transform="rotate(114 627 601)"/><circle cx="645" cy="601" r="5" /><path d="M1121 330 q18 -12 37 0 q-9 12 -18 18" transform="rotate(128 1121 330)"/><path d="M594 513 q13 -9 26 0 q-7 9 -13 13" transform="rotate(14 594 513)"/><path d="M673 322 Q673 328 679 328 Q673 328 673 333 Q673 328 667 328 Q673 328 673 322Z"/><path d="M635 284 Q635 293 644 293 Q635 293 635 302 Q635 293 627 293 Q635 293 635 284Z"/><path d="M806 497 q15 -10 30 0 q-7 10 -15 15" transform="rotate(41 806 497)"/><path d="M742 617 Q742 623 749 623 Q742 623 742 629 Q742 623 736 623 Q742 623 742 617Z"/><path d="M1045 224 q13 -9 26 0 q-7 9 -13 13" transform="rotate(95 1045 224)"/><rect x="947" y="203" width="18" height="15" rx="5" transform="rotate(24 947 203)"/><path d="M552 317 q11 -7 21 0 q-5 7 -11 11" transform="rotate(50 552 317)"/><path d="M963 270 q20 -13 40 0 q-10 13 -20 20" transform="rotate(6 963 270)"/><circle cx="886" cy="539" r="3.4" /><rect x="920" y="267" width="26" height="16" rx="5" transform="rotate(13 920 267)"/><rect x="1172" y="427" width="31" height="22" rx="5" transform="rotate(2 1172 427)"/><path d="M1323 264 q10 -6 19 0 q-5 6 -10 10" transform="rotate(109 1323 264)"/><path d="M684 391 q17 -12 35 0 q-9 12 -17 17" transform="rotate(142 684 391)"/><circle cx="684" cy="414" r="11" /><rect x="919" y="198" width="28" height="20" rx="5" transform="rotate(30 919 198)"/><circle cx="635" cy="253" r="10" /><circle cx="862" cy="392" r="3.1" /><rect x="539" y="614" width="24" height="24" rx="5" transform="rotate(-21 539 614)"/><circle cx="604" cy="329" r="8" /><circle cx="1028" cy="432" r="2.7" /><circle cx="553" cy="572" r="7" /><path d="M617 510 q17 -12 35 0 q-9 12 -17 17" transform="rotate(11 617 510)"/><circle cx="840" cy="355" r="16" /><path d="M512 415 q20 -13 40 0 q-10 13 -20 20" transform="rotate(26 512 415)"/><circle cx="880" cy="536" r="7" /><circle cx="1268" cy="249" r="2.1" /><circle cx="853" cy="217" r="16" /><circle cx="1155" cy="531" r="7" /><rect x="966" y="296" width="33" height="17" rx="5" transform="rotate(-13 966 296)"/><circle cx="1349" cy="472" r="9" /><circle cx="1054" cy="209" r="2.9" /><path d="M1245 463 q13 -9 27 0 q-7 9 -13 13" transform="rotate(71 1245 463)"/><path d="M1226 363 q10 -7 20 0 q-5 7 -10 10" transform="rotate(63 1226 363)"/><circle cx="638" cy="443" r="6" /><circle cx="665" cy="404" r="2.4" /><path d="M1360 505 q10 -7 20 0 q-5 7 -10 10" transform="rotate(69 1360 505)"/><circle cx="539" cy="511" r="2.0" /><circle cx="491" cy="268" r="2.3" /><circle cx="1298" cy="522" r="2.2" /><circle cx="611" cy="628" r="3.0" /><circle cx="1119" cy="614" r="8" /><path d="M817 221 q12 -8 23 0 q-6 8 -12 12" transform="rotate(139 817 221)"/><circle cx="937" cy="207" r="2.0" /><rect x="510" y="253" width="13" height="16" rx="5" transform="rotate(-6 510 253)"/><path d="M959 240 Q959 246 966 246 Q959 246 959 252 Q959 246 953 246 Q959 246 959 240Z"/><circle cx="1121" cy="499" r="6" /><circle cx="724" cy="521" r="2.3" /><circle cx="1246" cy="289" r="2.2" /><circle cx="666" cy="200" r="12" /><path d="M979 567 q11 -7 22 0 q-6 7 -11 11" transform="rotate(121 979 567)"/><path d="M1294 276 Q1294 284 1302 284 Q1294 284 1294 292 Q1294 284 1285 284 Q1294 284 1294 276Z"/><circle cx="1326" cy="595" r="12" /><circle cx="554" cy="385" r="1.6" /><rect x="816" y="338" width="18" height="13" rx="5" transform="rotate(-8 816 338)"/><path d="M898 254 Q898 261 904 261 Q898 261 898 267 Q898 261 892 261 Q898 261 898 254Z"/><circle cx="557" cy="344" r="1.8" /><rect x="994" y="516" width="27" height="10" rx="5" transform="rotate(-9 994 516)"/><circle cx="799" cy="211" r="1.6" /><rect x="916" y="460" width="19" height="15" rx="5" transform="rotate(-38 916 460)"/><rect x="784" y="606" width="18" height="22" rx="5" transform="rotate(-25 784 606)"/><path d="M893 474 q12 -8 24 0 q-6 8 -12 12" transform="rotate(104 893 474)"/><path d="M1315 541 Q1315 549 1323 549 Q1315 549 1315 557 Q1315 549 1307 549 Q1315 549 1315 541Z"/><circle cx="841" cy="379" r="3.2" /><path d="M1259 363 q8 -5 16 0 q-4 5 -8 8" transform="rotate(24 1259 363)"/><circle cx="926" cy="328" r="3.5" /><circle cx="608" cy="273" r="12" /><rect x="683" y="181" width="21" height="14" rx="5" transform="rotate(-1 683 181)"/><path d="M1054 435 Q1054 442 1062 442 Q1054 442 1054 450 Q1054 442 1046 442 Q1054 442 1054 435Z"/><circle cx="1215" cy="643" r="2.2" /><path d="M1265 322 Q1265 330 1273 330 Q1265 330 1265 339 Q1265 330 1256 330 Q1265 330 1265 322Z"/><path d="M1086 641 q9 -6 19 0 q-5 6 -9 9" transform="rotate(112 1086 641)"/><circle cx="912" cy="450" r="2.1" /><circle cx="1142" cy="436" r="7" /><rect x="764" y="266" width="15" height="11" rx="5" transform="rotate(-35 764 266)"/><circle cx="565" cy="517" r="9" /><circle cx="1163" cy="410" r="14" /><circle cx="1250" cy="206" r="2.5" /><path d="M1184 362 Q1184 368 1191 368 Q1184 368 1184 374 Q1184 368 1178 368 Q1184 368 1184 362Z"/><circle cx="1112" cy="337" r="3.0" /><rect x="1226" y="576" width="21" height="23" rx="5" transform="rotate(10 1226 576)"/><circle cx="1215" cy="563" r="9" /><circle cx="1071" cy="291" r="4" /><path d="M996 630 q9 -6 18 0 q-5 6 -9 9" transform="rotate(124 996 630)"/><circle cx="848" cy="482" r="3.4" /><path d="M1356 199 Q1356 204 1362 204 Q1356 204 1356 210 Q1356 204 1350 204 Q1356 204 1356 199Z"/><path d="M512 307 Q512 317 522 317 Q512 317 512 327 Q512 317 502 317 Q512 317 512 307Z"/><circle cx="581" cy="338" r="11" /><circle cx="905" cy="359" r="3.1" /><circle cx="1222" cy="316" r="2.7" /><circle cx="1157" cy="649" r="2.9" /><circle cx="961" cy="563" r="6" /><circle cx="570" cy="626" r="2.5" /><circle cx="581" cy="335" r="11" /><circle cx="602" cy="479" r="2.0" /><circle cx="904" cy="356" r="1.6" /><circle cx="531" cy="607" r="1.7" /><path d="M637 412 q10 -7 20 0 q-5 7 -10 10" transform="rotate(156 637 412)"/><path d="M906 379 q12 -8 25 0 q-6 8 -12 12" transform="rotate(10 906 379)"/><path d="M965 488 Q965 494 971 494 Q965 494 965 501 Q965 494 959 494 Q965 494 965 488Z"/><path d="M1311 593 q13 -9 26 0 q-7 9 -13 13" transform="rotate(150 1311 593)"/><circle cx="1121" cy="265" r="6" /><circle cx="580" cy="217" r="3.0" /><circle cx="751" cy="426" r="7" /><rect x="1330" y="186" width="30" height="24" rx="5" transform="rotate(19 1330 186)"/><path d="M830 564 q17 -11 34 0 q-9 11 -17 17" transform="rotate(177 830 564)"/><circle cx="564" cy="634" r="2.9" /><circle cx="697" cy="615" r="11" /><circle cx="677" cy="366" r="2.8" /><path d="M1197 348 Q1197 355 1204 355 Q1197 355 1197 362 Q1197 355 1190 355 Q1197 355 1197 348Z"/><circle cx="723" cy="613" r="1.7" /><circle cx="773" cy="535" r="13" /><circle cx="961" cy="505" r="5" /><circle cx="602" cy="348" r="1.5" /><circle cx="922" cy="373" r="2.6" /><path d="M1323 279 q12 -8 23 0 q-6 8 -12 12" transform="rotate(136 1323 279)"/><circle cx="571" cy="652" r="3.4" /><path d="M670 370 Q670 376 676 376 Q670 376 670 382 Q670 376 664 376 Q670 376 670 370Z"/><path d="M718 504 q12 -8 23 0 q-6 8 -12 12" transform="rotate(33 718 504)"/><circle cx="793" cy="653" r="12" /><circle cx="811" cy="488" r="11" /><path d="M1266 582 Q1266 589 1273 589 Q1266 589 1266 597 Q1266 589 1258 589 Q1266 589 1266 582Z"/><path d="M980 235 q16 -11 32 0 q-8 11 -16 16" transform="rotate(82 980 235)"/><circle cx="1068" cy="381" r="2.0" /><rect x="1010" y="454" width="13" height="21" rx="5" transform="rotate(-4 1010 454)"/><path d="M1003 465 q9 -6 19 0 q-5 6 -9 9" transform="rotate(84 1003 465)"/><circle cx="1360" cy="533" r="3.0" /><path d="M1357 373 q9 -6 18 0 q-5 6 -9 9" transform="rotate(178 1357 373)"/><path d="M912 293 q16 -10 31 0 q-8 10 -16 16" transform="rotate(169 912 293)"/><rect x="1214" y="561" width="34" height="11" rx="5" transform="rotate(30 1214 561)"/><path d="M1109 301 q13 -9 26 0 q-7 9 -13 13" transform="rotate(97 1109 301)"/><circle cx="1246" cy="274" r="2.8" /><path d="M540 446 q14 -9 27 0 q-7 9 -14 14" transform="rotate(44 540 446)"/><path d="M1188 589 q14 -10 29 0 q-7 10 -14 14" transform="rotate(163 1188 589)"/><circle cx="1185" cy="253" r="1.7" /><path d="M507 346 q18 -12 36 0 q-9 12 -18 18" transform="rotate(21 507 346)"/><path d="M636 366 q15 -10 30 0 q-8 10 -15 15" transform="rotate(162 636 366)"/><circle cx="538" cy="652" r="12" /><circle cx="1256" cy="528" r="12" /><circle cx="858" cy="188" r="2.1" /><rect x="1036" y="314" width="27" height="13" rx="5" transform="rotate(-30 1036 314)"/><circle cx="1093" cy="404" r="5" /><circle cx="1313" cy="472" r="1.9" /><path d="M1361 504 Q1361 511 1368 511 Q1361 511 1361 518 Q1361 511 1355 511 Q1361 511 1361 504Z"/><circle cx="751" cy="376" r="12" /><circle cx="853" cy="572" r="2.4" /><circle cx="926" cy="630" r="2.9" /><circle cx="684" cy="457" r="3.2" /><path d="M730 581 Q730 589 737 589 Q730 589 730 596 Q730 589 722 589 Q730 589 730 581Z"/><path d="M1307 358 Q1307 366 1315 366 Q1307 366 1307 374 Q1307 366 1299 366 Q1307 366 1307 358Z"/><circle cx="874" cy="212" r="2.1" /><circle cx="867" cy="636" r="2.9" /><circle cx="1073" cy="298" r="1.8" /><circle cx="1273" cy="301" r="2.2" /><rect x="1206" y="587" width="24" height="12" rx="5" transform="rotate(32 1206 587)"/><circle cx="553" cy="354" r="2.9" /><path d="M1071 345 q19 -13 39 0 q-10 13 -19 19" transform="rotate(4 1071 345)"/><circle cx="1039" cy="405" r="2.4" /><rect x="756" y="501" width="33" height="28" rx="5" transform="rotate(39 756 501)"/><path d="M826 568 Q826 576 835 576 Q826 576 826 585 Q826 576 818 576 Q826 576 826 568Z"/><rect x="1364" y="213" width="21" height="22" rx="5" transform="rotate(-23 1364 213)"/><circle cx="1357" cy="281" r="1.8" /><circle cx="826" cy="535" r="6" /><path d="M1053 472 Q1053 478 1059 478 Q1053 478 1053 484 Q1053 478 1047 478 Q1053 478 1053 472Z"/><path d="M1198 530 q9 -6 18 0 q-4 6 -9 9" transform="rotate(84 1198 530)"/><path d="M488 591 q19 -12 37 0 q-9 12 -19 19" transform="rotate(4 488 591)"/><rect x="787" y="437" width="14" height="24" rx="5" transform="rotate(-16 787 437)"/><rect x="927" y="240" width="15" height="12" rx="5" transform="rotate(1 927 240)"/><circle cx="736" cy="552" r="9" /><rect x="522" y="285" width="24" height="18" rx="5" transform="rotate(28 522 285)"/><circle cx="567" cy="587" r="16" /><rect x="942" y="375" width="31" height="27" rx="5" transform="rotate(-7 942 375)"/><path d="M484 254 q17 -11 33 0 q-8 11 -17 17" transform="rotate(128 484 254)"/><circle cx="614" cy="434" r="5" /><path d="M742 633 Q742 642 752 642 Q742 642 742 651 Q742 642 733 642 Q742 642 742 633Z"/><circle cx="515" cy="379" r="7" /><circle cx="574" cy="619" r="2.5" /><path d="M1057 604 q15 -10 29 0 q-7 10 -15 15" transform="rotate(90 1057 604)"/><circle cx="1280" cy="369" r="3.0" /><circle cx="704" cy="356" r="2.5" /><rect x="794" y="386" width="13" height="25" rx="5" transform="rotate(-35 794 386)"/><circle cx="945" cy="442" r="1.9" /><circle cx="562" cy="358" r="2.5" /><rect x="679" y="538" width="12" height="17" rx="5" transform="rotate(37 679 538)"/><path d="M480 464 q12 -8 24 0 q-6 8 -12 12" transform="rotate(108 480 464)"/><rect x="803" y="325" width="25" height="16" rx="5" transform="rotate(-0 803 325)"/><circle cx="934" cy="541" r="5" /><path d="M699 310 q13 -9 26 0 q-6 9 -13 13" transform="rotate(155 699 310)"/><path d="M833 312 Q833 317 838 317 Q833 317 833 323 Q833 317 827 317 Q833 317 833 312Z"/><circle cx="1352" cy="578" r="2.1" /><path d="M1205 552 Q1205 557 1210 557 Q1205 557 1205 562 Q1205 557 1200 557 Q1205 557 1205 552Z"/><path d="M1155 196 Q1155 204 1163 204 Q1155 204 1155 212 Q1155 204 1147 204 Q1155 204 1155 196Z"/><circle cx="1301" cy="486" r="15" /><circle cx="1145" cy="458" r="13" /><path d="M847 505 q19 -13 38 0 q-9 13 -19 19" transform="rotate(13 847 505)"/><path d="M1171 391 q12 -8 24 0 q-6 8 -12 12" transform="rotate(81 1171 391)"/><circle cx="864" cy="237" r="3.0" /><path d="M538 236 q16 -11 32 0 q-8 11 -16 16" transform="rotate(99 538 236)"/><circle cx="575" cy="237" r="3.4" /><circle cx="974" cy="621" r="9" /><circle cx="952" cy="581" r="14" /><circle cx="895" cy="196" r="2.3" /><rect x="1076" y="624" width="27" height="17" rx="5" transform="rotate(22 1076 624)"/><circle cx="568" cy="535" r="11" /><circle cx="654" cy="346" r="8" /><circle cx="1002" cy="429" r="2.6" /><rect x="1225" y="352" width="23" height="28" rx="5" transform="rotate(-14 1225 352)"/><circle cx="1096" cy="292" r="3.0" /><circle cx="987" cy="304" r="14" /><circle cx="811" cy="523" r="2.7" /><path d="M973 646 q13 -9 26 0 q-7 9 -13 13" transform="rotate(88 973 646)"/><circle cx="680" cy="540" r="8" /><path d="M1230 190 Q1230 198 1238 198 Q1230 198 1230 206 Q1230 198 1222 198 Q1230 198 1230 190Z"/><circle cx="966" cy="340" r="15" /><circle cx="1156" cy="565" r="13" /><rect x="669" y="276" width="25" height="12" rx="5" transform="rotate(21 669 276)"/><path d="M994 610 q16 -11 32 0 q-8 11 -16 16" transform="rotate(66 994 610)"/><circle cx="1322" cy="524" r="3.2" /><circle cx="1122" cy="307" r="4" /><circle cx="953" cy="302" r="2.0" /><circle cx="591" cy="412" r="2.1" /><path d="M722 424 q10 -6 19 0 q-5 6 -10 10" transform="rotate(155 722 424)"/><rect x="1236" y="472" width="28" height="20" rx="5" transform="rotate(13 1236 472)"/><circle cx="1294" cy="551" r="1.6" /><path d="M1309 354 q10 -7 21 0 q-5 7 -10 10" transform="rotate(82 1309 354)"/><path d="M804 529 q14 -9 28 0 q-7 9 -14 14" transform="rotate(102 804 529)"/><path d="M785 292 q9 -6 18 0 q-4 6 -9 9" transform="rotate(169 785 292)"/><path d="M1060 215 q9 -6 18 0 q-4 6 -9 9" transform="rotate(102 1060 215)"/><circle cx="581" cy="653" r="3.2" /><circle cx="529" cy="499" r="4" /><path d="M983 641 Q983 650 993 650 Q983 650 983 659 Q983 650 974 650 Q983 650 983 641Z"/><circle cx="1174" cy="430" r="10" /><circle cx="639" cy="432" r="2.5" /><circle cx="650" cy="517" r="2.5" /><rect x="544" y="413" width="33" height="20" rx="5" transform="rotate(-29 544 413)"/><path d="M742 331 Q742 341 751 341 Q742 341 742 351 Q742 341 732 341 Q742 341 742 331Z"/><path d="M1345 634 q18 -12 36 0 q-9 12 -18 18" transform="rotate(168 1345 634)"/><rect x="492" y="415" width="27" height="21" rx="5" transform="rotate(9 492 415)"/><rect x="1306" y="222" width="33" height="11" rx="5" transform="rotate(-31 1306 222)"/><circle cx="1249" cy="638" r="4" /><rect x="1214" y="509" width="25" height="24" rx="5" transform="rotate(25 1214 509)"/><path d="M475 213 q20 -13 39 0 q-10 13 -20 20" transform="rotate(150 475 213)"/><circle cx="838" cy="341" r="1.5" /><rect x="1161" y="306" width="24" height="16" rx="5" transform="rotate(14 1161 306)"/><path d="M880 293 q10 -6 19 0 q-5 6 -10 10" transform="rotate(27 880 293)"/><path d="M700 409 q12 -8 23 0 q-6 8 -12 12" transform="rotate(43 700 409)"/><rect x="1058" y="305" width="18" height="26" rx="5" transform="rotate(-25 1058 305)"/><circle cx="681" cy="325" r="3.0" /><rect x="1075" y="558" width="14" height="24" rx="5" transform="rotate(-20 1075 558)"/><path d="M668 379 q12 -8 24 0 q-6 8 -12 12" transform="rotate(64 668 379)"/><circle cx="1287" cy="653" r="1.8" /><circle cx="1178" cy="554" r="3.1" /><rect x="812" y="318" width="28" height="19" rx="5" transform="rotate(25 812 318)"/><circle cx="486" cy="419" r="1.6" /><circle cx="1290" cy="249" r="15" /><circle cx="1331" cy="625" r="3.4" /><path d="M600 522 q10 -7 20 0 q-5 7 -10 10" transform="rotate(24 600 522)"/><path d="M1079 592 Q1079 602 1089 602 Q1079 602 1079 612 Q1079 602 1069 602 Q1079 602 1079 592Z"/><circle cx="879" cy="359" r="7" /><circle cx="1311" cy="215" r="8" /><circle cx="518" cy="327" r="5" /><rect x="944" y="439" width="29" height="19" rx="5" transform="rotate(36 944 439)"/><circle cx="547" cy="287" r="8" /><rect x="1153" y="622" width="16" height="16" rx="5" transform="rotate(5 1153 622)"/><path d="M737 559 q13 -9 26 0 q-7 9 -13 13" transform="rotate(109 737 559)"/><circle cx="1229" cy="403" r="15" /><path d="M1346 193 q13 -8 25 0 q-6 8 -13 13" transform="rotate(9 1346 193)"/><path d="M619 257 Q619 264 625 264 Q619 264 619 270 Q619 264 613 264 Q619 264 619 257Z"/><path d="M491 286 q14 -9 27 0 q-7 9 -14 14" transform="rotate(118 491 286)"/><circle cx="889" cy="268" r="8" /><rect x="511" y="305" width="20" height="19" rx="5" transform="rotate(10 511 305)"/><path d="M757 351 q15 -10 30 0 q-7 10 -15 15" transform="rotate(75 757 351)"/><circle cx="956" cy="401" r="3.3" /><path d="M682 627 q19 -12 37 0 q-9 12 -19 19" transform="rotate(29 682 627)"/><circle cx="928" cy="651" r="1.8" /><rect x="1119" y="293" width="15" height="27" rx="5" transform="rotate(-17 1119 293)"/><circle cx="560" cy="509" r="2.6" /><rect x="918" y="621" width="20" height="10" rx="5" transform="rotate(-0 918 621)"/><path d="M714 448 Q714 455 721 455 Q714 455 714 462 Q714 455 707 455 Q714 455 714 448Z"/><rect x="554" y="418" width="26" height="27" rx="5" transform="rotate(-18 554 418)"/><path d="M869 221 q10 -7 21 0 q-5 7 -10 10" transform="rotate(149 869 221)"/><path d="M1186 302 q14 -9 28 0 q-7 9 -14 14" transform="rotate(77 1186 302)"/><rect x="969" y="632" width="23" height="15" rx="5" transform="rotate(27 969 632)"/><circle cx="923" cy="344" r="7" /></g></svg>
  <svg style="left:474px;top:181px" width="892" height="477" viewBox="474 181 892 477"><g fill="none" stroke="#1b262d" stroke-width="1.3"><path d="M1312 535 q14 -10 29 0 q-7 10 -14 14" transform="rotate(133 1312 535)"/><circle cx="1355" cy="195" r="2.9" /><circle cx="1315" cy="611" r="7" /><rect x="1258" y="440" width="10" height="11" rx="4" transform="rotate(-18 1258 440)"/><circle cx="1354" cy="546" r="10" /><circle cx="1242" cy="476" r="3" /><circle cx="1347" cy="281" r="12" /><path d="M1348 319 q10 -7 21 0 q-5 7 -10 10" transform="rotate(122 1348 319)"/><rect x="1251" y="630" width="25" height="21" rx="4" transform="rotate(-16 1251 630)"/><circle cx="1274" cy="260" r="4" /><circle cx="1265" cy="469" r="9" /><path d="M1271 329 q10 -7 20 0 q-5 7 -10 10" transform="rotate(57 1271 329)"/><circle cx="1291" cy="517" r="12" /><path d="M1225 539 q5 -3 10 0 q-3 3 -5 5" transform="rotate(142 1225 539)"/><circle cx="1275" cy="457" r="3" /><circle cx="1248" cy="637" r="10" /><circle cx="1356" cy="630" r="2.0" /><circle cx="1298" cy="551" r="10" /><circle cx="1337" cy="591" r="12" /><rect x="1235" y="344" width="25" height="13" rx="4" transform="rotate(34 1235 344)"/><circle cx="1301" cy="330" r="1.8" /><rect x="1233" y="252" width="26" height="10" rx="4" transform="rotate(-36 1233 252)"/><circle cx="1364" cy="435" r="1.9" /><circle cx="1308" cy="575" r="2.1" /><circle cx="1230" cy="618" r="7" /><path d="M1343 243 q14 -10 29 0 q-7 10 -14 14" transform="rotate(113 1343 243)"/><circle cx="1335" cy="232" r="1.7" /><circle cx="1344" cy="322" r="3.0" /><circle cx="1345" cy="647" r="2.2" /><circle cx="1327" cy="410" r="2.1" /><path d="M1243 361 q15 -10 29 0 q-7 10 -15 15" transform="rotate(113 1243 361)"/><circle cx="1294" cy="342" r="5" /><circle cx="1335" cy="595" r="2.7" /><rect x="1334" y="512" width="22" height="13" rx="4" transform="rotate(16 1334 512)"/><path d="M1262 413 q12 -8 24 0 q-6 8 -12 12" transform="rotate(53 1262 413)"/><rect x="1358" y="491" width="10" height="16" rx="4" transform="rotate(-20 1358 491)"/><path d="M1319 402 q11 -8 23 0 q-6 8 -11 11" transform="rotate(144 1319 402)"/><path d="M1272 488 q13 -9 27 0 q-7 9 -13 13" transform="rotate(63 1272 488)"/><rect x="1343" y="596" width="26" height="21" rx="4" transform="rotate(1 1343 596)"/><path d="M1298 260 q14 -10 29 0 q-7 10 -14 14" transform="rotate(86 1298 260)"/><path d="M1322 524 q7 -4 13 0 q-3 4 -7 7" transform="rotate(140 1322 524)"/><circle cx="1306" cy="498" r="2.4" /><path d="M1334 485 q5 -4 11 0 q-3 4 -5 5" transform="rotate(29 1334 485)"/><circle cx="1286" cy="491" r="9" /><circle cx="1313" cy="201" r="1.8" /><circle cx="1230" cy="245" r="1.8" /><circle cx="1250" cy="198" r="2.1" /><circle cx="1310" cy="463" r="11" /><circle cx="1222" cy="374" r="2.1" /><circle cx="1239" cy="578" r="1.6" /><rect x="1310" y="226" width="15" height="16" rx="4" transform="rotate(37 1310 226)"/><path d="M1340 381 q11 -8 23 0 q-6 8 -11 11" transform="rotate(66 1340 381)"/><rect x="1242" y="465" width="25" height="22" rx="4" transform="rotate(9 1242 465)"/><circle cx="1273" cy="607" r="4" /><circle cx="1303" cy="474" r="9" /><circle cx="1350" cy="360" r="1.8" /><circle cx="1264" cy="645" r="2.9" /><circle cx="1354" cy="465" r="3.0" /><circle cx="1293" cy="379" r="3.0" /><circle cx="1293" cy="318" r="1.7" /></g></svg>
  <div class="a" style="left:1357px;top:390px;width:5px;height:70px;background:#374045"></div>
  <svg style="left:1352px;top:185px" width="10" height="6"><path d="M0 6 L5 0 L10 6Z" fill="#3a444a"/></svg><svg style="left:1352px;top:648px" width="10" height="6"><path d="M0 0 L5 6 L10 0Z" fill="#3a444a"/></svg>
  <div class="a" style="left:474px;top:121px;width:892px;height:60px;background:#202c33"></div>
  <div class="a" style="left:1184px;top:133px;width:71px;height:36px;border-radius:18px;border:1px solid #36434b"></div>
  <div class="a" style="left:1222px;top:147px;width:5px;height:9px;background:#6a7a83"></div><svg style="left:1235px;top:149px" width="8" height="6"><path d="M1 1 L4 4 L7 1" stroke="#8696a0" stroke-width="1.3" fill="none"/></svg>
  <svg style="left:1269px;top:141px" width="20" height="20" viewBox="0 0 20 20"><circle cx="8" cy="8" r="6" stroke="#aebac1" stroke-width="2.2" fill="none"/><path d="M12.5 12.5 L18.5 18.5" stroke="#aebac1" stroke-width="2.4"/></svg>
  <div class="a" style="left:1327px;top:143px;width:4px;height:4px;border-radius:2px;background:#aebac1;box-shadow:0 6px 0 #aebac1,0 12px 0 #aebac1"></div>
  <!-- bubbles -->
  <div class="a" style="left:1100px;top:181px;width:191px;height:5px;border-radius:0 0 8px 8px;background:#005c4b"></div>
  <div class="a" style="left:1100px;top:188px;width:191px;height:33px;border-radius:8px;background:#005c4b"></div>
  <div class="t" style="left:1165px;top:206px;width:100px;text-align:right;font-size:11px;color:#a5c8bf">4:25 p.m.</div>
  <svg style="left:1269px;top:206px" width="16" height="10" viewBox="0 0 16 10"><path d="M1 5.5 L3.8 8.5 L10 1 M6.8 8.3 L14 1" stroke="#9fc3ba" stroke-width="1.3" fill="none"/></svg>
  <div class="a" style="left:1100px;top:223px;width:191px;height:33px;border-radius:8px;background:#005c4b"></div>
  <div class="t" style="left:1165px;top:241px;width:100px;text-align:right;font-size:11px;color:#a5c8bf">4:26 p.m.</div>
  <svg style="left:1269px;top:241px" width="16" height="10" viewBox="0 0 16 10"><path d="M1 5.5 L3.8 8.5 L10 1 M6.8 8.3 L14 1" stroke="#9fc3ba" stroke-width="1.3" fill="none"/></svg>
  <!-- doc bubble 1 -->
  <svg style="left:1286px;top:360px" width="11" height="10"><path d="M0 0 H10 L0 10 Z" fill="#005c4b"/></svg>
  <div class="a" style="left:953px;top:360px;width:338px;height:209px;border-radius:8px 0 8px 8px;background:#005c4b"></div>
  <div class="a" style="left:957px;top:364px;width:331px;height:97px;border-radius:6px 6px 0 0;background:#ffffff"></div>
  <div class="a" style="left:957px;top:461px;width:331px;height:84px;background:#025144"></div>
  <div class="a" style="left:1236px;top:474px;width:32px;height:32px;border-radius:50%;border:1.5px solid #6f9d93"></div>
  <svg style="left:1244px;top:482px" width="16" height="16" viewBox="0 0 16 16"><path d="M6 2 H10 V8 H13 L8 13.5 L3 8 H6Z" fill="#8fb8ae"/></svg>
  <div class="t" style="left:1165px;top:554px;width:100px;text-align:right;font-size:11px;color:#a5c8bf">10:39 a.m.</div>
  <svg style="left:1269px;top:554px" width="16" height="10" viewBox="0 0 16 10"><path d="M1 5.5 L3.8 8.5 L10 1 M6.8 8.3 L14 1" stroke="#9fc3ba" stroke-width="1.3" fill="none"/></svg>
  <!-- doc bubble 2 -->
  <div class="a" style="left:953px;top:572px;width:338px;height:100px;border-radius:8px;background:#005c4b"></div>
  <div class="a" style="left:957px;top:575px;width:331px;height:83px;border-radius:6px 6px 0 0;background:#ffffff"></div>
  <div class="t" style="left:1150px;top:622px;width:100px;text-align:right;font-size:16px;font-weight:bold;color:#1f6e3c;letter-spacing:1px">SO</div><svg style="left:1222px;top:447px" width="10" height="11"><rect x="0.5" y="0.5" width="9" height="10" fill="none" stroke="#aaa" stroke-width="1"/><path d="M2 8 L4 5 L6 7 L8 4" stroke="#aaa" stroke-width="0.8" fill="none"/></svg>
  <div class="a" style="left:957px;top:651px;width:265px;height:7px;background:#c9c9c9"></div>
  <div class="t" style="left:1060px;top:651px;font-size:7px;color:#555">ESTADO DE RENDIMIENTO FINANCIERO</div>
  <!-- input bar -->
  <div class="a" style="left:474px;top:658px;width:892px;height:62px;background:#202c33"></div>
  <svg style="left:500px;top:677px" width="24" height="24" viewBox="0 0 24 24"><circle cx="12" cy="12" r="10" stroke="#8696a0" stroke-width="1.8" fill="none"/><circle cx="8.5" cy="9.5" r="1.5" fill="#8696a0"/><circle cx="15.5" cy="9.5" r="1.5" fill="#8696a0"/><path d="M6.5 13.5 Q12 19.5 17.5 13.5 Z" fill="#8696a0"/></svg>
  <svg style="left:546px;top:678px" width="20" height="20"><path d="M10 1 V19 M1 10 H19" stroke="#aebac1" stroke-width="2.2"/></svg>
  <div class="a" style="left:588px;top:668px;width:712px;height:42px;border-radius:8px;background:#2a3942"></div>
  <div class="t" style="left:604px;top:682px;font-size:14.5px;color:#8696a0">Escribe un mensaje</div>
  <svg style="left:1320px;top:675px" width="17" height="26" viewBox="0 0 17 26"><rect x="4.5" y="1" width="8" height="15" rx="4" fill="#aebac1"/><path d="M1.5 12 Q1.5 20 8.5 20 Q15.5 20 15.5 12" stroke="#aebac1" stroke-width="2" fill="none"/><path d="M8.5 20 V25" stroke="#aebac1" stroke-width="2"/></svg>
 </div>
</div>

<!-- ============ TASKBAR ============ -->
<div class="a" id="tb" style="left:0;top:720px;width:1366px;height:48px;background:#1c1c1c;border-top:1px solid #2e2e2e">
 <div class="a" style="left:0;top:-721px;width:1366px;height:768px">
  <!-- weather -->
  <div class="a" style="left:22px;top:733px;width:23px;height:21px;border-radius:50%;background:radial-gradient(circle at 40% 40%,#ffb347 0,#f58a1f 70%,#e06f10 100%)"></div>
  <div class="a" style="left:30px;top:744px;width:16px;height:8px;border-radius:4px;background:#c7d3e6"></div>
  <div class="a" style="left:32px;top:728px;width:15px;height:15px;border-radius:50%;background:#f28b9b"></div>
  <div class="t" style="left:32px;top:730px;width:15px;text-align:center;font-size:11px;color:#2a1a1a">1</div>
  <!-- start -->
  <svg style="left:188px;top:733px" width="23" height="23" viewBox="0 0 23 23"><defs><linearGradient id="gw" x1="0" y1="0" x2="1" y2="1"><stop offset="0" stop-color="#6fd6fb"/><stop offset="1" stop-color="#1a8fe3"/></linearGradient></defs><rect x="0" y="0" width="11" height="11" fill="url(#gw)"/><rect x="12" y="0" width="11" height="11" fill="url(#gw)"/><rect x="0" y="12" width="11" height="11" fill="url(#gw)"/><rect x="12" y="12" width="11" height="11" fill="url(#gw)"/></svg>
  <!-- search -->
  <div class="a" style="left:224px;top:728px;width:220px;height:32px;border-radius:16px;background:#323232;border:1px solid #3d3d3d"></div>
  <svg style="left:236px;top:737px" width="15" height="15" viewBox="0 0 15 15"><circle cx="6" cy="6" r="5" stroke="#e0e0e0" stroke-width="1.5" fill="none"/><path d="M9.6 9.6 L14 14" stroke="#e0e0e0" stroke-width="1.6"/></svg>
  <div class="t" style="left:261px;top:737px;font-size:13.5px;color:#d6d6d6">Búsqueda</div>
  <svg style="left:391px;top:734px" width="48" height="21" viewBox="0 0 48 21"><ellipse cx="24" cy="17" rx="20" ry="3.5" fill="#9c8fd8"/><path d="M6 15 L16 4 L22 10 L28 3 L40 15 Z" fill="#b7a9e8"/><path d="M16 4 L19 8 L14 15 Z" fill="#7e6fc7"/><circle cx="30" cy="5" r="3" fill="#ffd86b"/><path d="M2 16 L5 8 L8 16 Z M42 16 L45 9 L47 16 Z M37 16 L39.5 10 L42 16Z" fill="#2f8a6a"/></svg>
  <!-- task view -->
  <div class="a" style="left:456px;top:741px;width:15px;height:15px;border-radius:2px;background:#5a5a5a"></div>
  <div class="a" style="left:464px;top:733px;width:17px;height:15px;border-radius:2px;background:#e6e6e6"></div>
  <!-- meet -->
  <svg style="left:500px;top:733px" width="24" height="23" viewBox="0 0 24 23"><defs><linearGradient id="gmeet" x1="0" y1="0" x2="1" y2="1"><stop offset="0" stop-color="#8b7cf0"/><stop offset="1" stop-color="#5a4fc0"/></linearGradient></defs><path d="M12 0.5 A11.5 11 0 1 1 5 19.5 L0.5 22.5 L2.5 16.5 A11.5 11 0 0 1 12 0.5 Z" fill="url(#gmeet)"/><rect x="5.5" y="7.5" width="9" height="8" rx="1.5" fill="#fff"/><path d="M14.5 10.5 L18.5 8 V15 L14.5 12.5 Z" fill="#fff"/></svg>
  <!-- copilot -->
  <svg style="left:540px;top:728px" width="32" height="32" viewBox="0 0 32 32"><defs><linearGradient id="gc1" x1="0" y1="0" x2="0" y2="1"><stop offset="0" stop-color="#2a9df4"/><stop offset=".55" stop-color="#5ac860"/><stop offset="1" stop-color="#f5d020"/></linearGradient><linearGradient id="gc2" x1="0" y1="0" x2="0" y2="1"><stop offset="0" stop-color="#b050e0"/><stop offset=".5" stop-color="#f0508a"/><stop offset="1" stop-color="#ffb050"/></linearGradient></defs>
  <path d="M18 6 H20 Q21.5 6 22 8 L23 11.5 H18Z" fill="#1a4fd0"/><path d="M11 20 H14 L15 26 Q12 26 11.5 24Z" fill="#f05a28"/>
  <path d="M10.5 6 H18.5 Q19.5 6 19.2 7 L14.5 19.5 Q14 20.5 13 20.5 H6.5 Q5 20.5 5.4 19 L8.5 8 Q9 6 10.5 6Z" fill="url(#gc1)"/>
  <path d="M21 11.5 H26.5 Q28 11.5 27.6 13 L24 24 Q23.3 26 21.5 26 H13.5 Q12.8 26 13.1 25 L17.5 13 Q18 11.5 19.5 11.5Z" fill="url(#gc2)"/></svg>
  <!-- acrobat -->
  <div class="a" style="left:588px;top:732px;width:24px;height:24px;background:#e8451f"></div>
  <svg style="left:591px;top:735px" width="18" height="18" viewBox="0 0 18 18"><path d="M5 17 Q3 13 6 8 L9 2 Q12 3 10 8 L13 14 Q14 17 10 16 L6 11 Z" fill="#fff"/><path d="M10 1 L15 2 L13 9 Z" fill="#fff"/></svg>
  <!-- teams -->
  <svg style="left:631px;top:733px" width="26" height="23" viewBox="0 0 26 23"><circle cx="14" cy="4" r="3.5" fill="#7b83eb"/><circle cx="22" cy="5.5" r="2.6" fill="#7b83eb"/><rect x="18" y="9" width="7.5" height="10" rx="3.5" fill="#5059c9"/><rect x="8" y="8" width="12" height="14" rx="5" fill="#7b83eb"/><rect x="0.5" y="6" width="11" height="11" rx="1.5" fill="#4b53bc"/><path d="M3 9 H9 M6 9 V15" stroke="#fff" stroke-width="1.8"/></svg>
  <!-- explorer active -->
  <div class="a" style="left:704px;top:725px;width:5px;height:38px;border-radius:0 5px 5px 0;background:#262626"></div>
  <div class="a" style="left:668px;top:724px;width:35px;height:40px;border-radius:5px;background:#2c2c2c"></div>
  <svg style="left:676px;top:733px" width="24" height="21" viewBox="0 0 24 21"><path d="M0 1.5 Q0 0 1.5 0 H8 L10 2 H22.5 Q24 2 24 3.5 V19.5 Q24 21 22.5 21 H1.5 Q0 21 0 19.5 Z" fill="#e8a317"/><path d="M0 5 H24 V19.5 Q24 21 22.5 21 H1.5 Q0 21 0 19.5 Z" fill="#ffd35c"/><rect x="5" y="15" width="14" height="6" rx="2" fill="#1e88e5"/><rect x="6" y="16" width="12" height="2" fill="#5cb4f5"/></svg>
  <div class="a" style="left:680px;top:760px;width:16px;height:3px;border-radius:2px;background:#4cc2ff"></div>
  <!-- excel -->
  <svg style="left:719px;top:733px" width="25" height="22" viewBox="0 0 25 22"><rect x="5" y="0" width="20" height="22" rx="1.5" fill="#21a366"/><rect x="5" y="0" width="20" height="7.3" fill="#33c481"/><rect x="5" y="14.6" width="20" height="7.4" fill="#107c41"/><rect x="15" y="0" width="10" height="22" fill="#185c37" opacity=".35"/><rect x="0" y="4.5" width="12" height="13" rx="1.5" fill="#107c41"/><path d="M3 7.5 L9 14.5 M9 7.5 L3 14.5" stroke="#fff" stroke-width="1.8"/></svg>
  <div class="a" style="left:729px;top:761px;width:6px;height:3px;border-radius:2px;background:#9a9a9a"></div>
  <!-- edge -->
  <svg style="left:764px;top:732px" width="24" height="24" viewBox="0 0 24 24"><defs><linearGradient id="ged" x1="0" y1="0" x2="1" y2="1"><stop offset="0" stop-color="#45d06b"/><stop offset=".5" stop-color="#1fa2e0"/><stop offset="1" stop-color="#0c59a4"/></linearGradient></defs><circle cx="12" cy="12" r="11.5" fill="url(#ged)"/><path d="M23 13 Q22 6 14 6 Q7 6 7 12 Q7 17 12 17 Q18 17 22 14 Q19 21 12 21 Q3 21 2 12 Q4 19 11 18 Q6 15 9 10 Q12 8 16 9.5 Q20 11 23 13Z" fill="#0b5aa8" opacity=".6"/><circle cx="13" cy="12.5" r="3.5" fill="#1f1f1f" opacity=".0"/></svg>
  <div class="a" style="left:773px;top:761px;width:6px;height:3px;border-radius:2px;background:#9a9a9a"></div>
  <!-- word -->
  <svg style="left:808px;top:733px" width="25" height="22" viewBox="0 0 25 22"><rect x="5" y="0" width="20" height="22" rx="1.5" fill="#2b7cd3"/><rect x="5" y="0" width="20" height="7.3" fill="#41a5ee"/><rect x="5" y="14.6" width="20" height="7.4" fill="#185abd"/><rect x="0" y="4.5" width="12" height="13" rx="1.5" fill="#185abd"/><path d="M2.2 7.5 L4 14.5 L6 9 L8 14.5 L9.8 7.5" stroke="#fff" stroke-width="1.3" fill="none"/></svg>
  <div class="a" style="left:817px;top:761px;width:6px;height:3px;border-radius:2px;background:#9a9a9a"></div>
  <!-- firefox -->
  <svg style="left:852px;top:731px" width="24" height="25" viewBox="0 0 24 25"><defs><radialGradient id="gff" cx=".6" cy=".2" r=".9"><stop offset="0" stop-color="#ffde3a"/><stop offset=".45" stop-color="#ff8a1e"/><stop offset=".8" stop-color="#f2345a"/><stop offset="1" stop-color="#d81f6e"/></radialGradient></defs><path d="M12 24 A11 11 0 0 1 1.5 10 Q3 6 5 5 Q5 8 7 9 Q9 4 15 2 Q14 4 16 6 Q22 8 23 13 A11 11 0 0 1 12 24 Z" fill="url(#gff)"/><circle cx="12.5" cy="14" r="5.5" fill="#6b3fd8"/><path d="M7 12 Q10 9 15 11 Q12 12 12 14 Q9 14 7 12Z" fill="#ff9a2a"/></svg>
  <!-- chrome -->
  <svg style="left:896px;top:732px" width="24" height="24" viewBox="0 0 24 24"><circle cx="12" cy="12" r="11.5" fill="#34a853"/><path d="M12 0.5 A11.5 11.5 0 0 1 22 6.25 L12 6.25 Z M12 0.5 A11.5 11.5 0 0 0 2 6.25 L7 15 Z" fill="#ea4335"/><path d="M2 6.25 A11.5 11.5 0 0 0 2 6.25Z" fill="#ea4335"/><path d="M12 0.5 A11.5 11.5 0 0 0 2.04 6.25 L7.02 14.9 L12 6.25 H21.96 A11.5 11.5 0 0 0 12 0.5Z" fill="#ea4335"/><path d="M21.96 6.25 H12 L17 15 L12 23.5 A11.5 11.5 0 0 0 21.96 6.25Z" fill="#fbbc04"/><circle cx="12" cy="12" r="5.2" fill="#fff"/><circle cx="12" cy="12" r="4.1" fill="#1a73e8"/></svg>
  <!-- spotify -->
  <svg style="left:940px;top:732px" width="24" height="24" viewBox="0 0 24 24"><circle cx="12" cy="12" r="11.5" fill="#1ed760"/><path d="M5.5 8.5 Q12 6.5 18.5 9.5 M6.2 12 Q12 10.3 17.5 13 M7 15.3 Q12 14 16.3 16.3" stroke="#121212" stroke-width="2" fill="none" stroke-linecap="round"/></svg>
  <div class="a" style="left:949px;top:761px;width:6px;height:3px;border-radius:2px;background:#9a9a9a"></div>
  <!-- chrome 2 -->
  <svg style="left:984px;top:732px" width="24" height="24" viewBox="0 0 24 24"><circle cx="12" cy="12" r="11.5" fill="#34a853"/><path d="M12 0.5 A11.5 11.5 0 0 0 2.04 6.25 L7.02 14.9 L12 6.25 H21.96 A11.5 11.5 0 0 0 12 0.5Z" fill="#ea4335"/><path d="M21.96 6.25 H12 L17 15 L12 23.5 A11.5 11.5 0 0 0 21.96 6.25Z" fill="#fbbc04"/><circle cx="12" cy="12" r="5.2" fill="#fff"/><circle cx="12" cy="12" r="4.1" fill="#1a73e8"/></svg>
  <svg style="left:997px;top:727px" width="16" height="16" viewBox="0 0 100 100"><defs><clipPath id="pug2"><circle cx="50" cy="50" r="50"/></clipPath></defs><g clip-path="url(#pug2)"><rect width="100" height="100" fill="#dcdce4"/><path d="M20 15 L42 40 L30 55Z M80 15 L58 40 L70 55Z" fill="#1f3f8f"/><path d="M18 12 L30 30 L24 35Z M82 12 L70 30 L76 35Z" fill="#111"/><path d="M30 40 Q50 25 70 40 L75 75 Q50 100 25 75Z" fill="#6a6a70"/><path d="M38 50 Q50 42 62 50 L60 80 Q50 90 40 80Z" fill="#2a2a30"/><circle cx="40" cy="50" r="4" fill="#eee"/><circle cx="60" cy="50" r="4" fill="#eee"/><rect x="5" y="45" width="4" height="8" fill="#c04040"/><rect x="91" y="45" width="4" height="8" fill="#c04040"/></g></svg>
  <div class="a" style="left:993px;top:761px;width:6px;height:3px;border-radius:2px;background:#9a9a9a"></div>
  <!-- java -->
  <div class="a" style="left:1028px;top:732px;width:24px;height:24px;border-radius:2px;background:linear-gradient(180deg,#f4f4f6,#c9ccd4);border:1px solid #8a9ab0"></div>
  <svg style="left:1030px;top:734px" width="20" height="20" viewBox="0 0 20 20"><path d="M10 1 L15 15 Q13 19 8 18 L3 16 Q6 14 7 9 Z" fill="#2a2a2a"/><path d="M7 12 Q10 17 15 15 L17 18 H8 Q4 17 5 13Z" fill="#fff"/><circle cx="11" cy="9" r="2.5" fill="#e0202a"/></svg>
  <div class="a" style="left:1037px;top:761px;width:6px;height:3px;border-radius:2px;background:#9a9a9a"></div>
  <!-- tray -->
  <svg style="left:1130px;top:740px" width="12" height="7"><path d="M0.8 6.2 L6 1 L11.2 6.2" stroke="#fff" stroke-width="1.3" fill="none"/></svg>
  <div class="t" style="left:1164px;top:732px;font-size:11px;color:#fff">ESP</div>
  <div class="t" style="left:1163px;top:747px;font-size:11px;color:#fff">LAA</div>
  <svg style="left:1203px;top:735px" width="18" height="18" viewBox="0 0 18 18"><rect x="0.6" y="1.6" width="11.5" height="10" rx="1" stroke="#fff" stroke-width="1.1" fill="none"/><path d="M4 16.5 H9 M6.3 11.6 V16.5" stroke="#fff" stroke-width="1.1"/><rect x="13" y="0.6" width="4" height="6" rx="1.5" stroke="#fff" stroke-width="1" fill="none"/><path d="M15 6.6 V16.5 H10" stroke="#fff" stroke-width="1" fill="none"/></svg>
  <svg style="left:1228px;top:736px" width="17" height="17" viewBox="0 0 17 17"><path d="M1 6 H4 L8 2.5 V14.5 L4 11 H1 Z" stroke="#fff" stroke-width="1.1" fill="none" stroke-linejoin="round"/><path d="M10.5 6 Q12 8.5 10.5 11" stroke="#fff" stroke-width="1.1" fill="none"/><path d="M13 4 Q15.5 8.5 13 13" stroke="#888" stroke-width="1.1" fill="none"/></svg>
  <div class="t" style="left:1262px;top:731px;width:61px;text-align:right;font-size:12px;color:#fff">10:41</div>
  <div class="t" style="left:1253px;top:746px;width:70px;text-align:right;font-size:12px;color:#fff">11/11/2024</div>
  <svg style="left:1331px;top:737px" width="15" height="16" viewBox="0 0 15 16"><path d="M7.5 0.5 Q2.5 0.5 2.5 6 V10 L0.5 12.5 H14.5 L12.5 10 V6 Q12.5 0.5 7.5 0.5Z" fill="#8ad8f8"/><path d="M5 14 Q7.5 16.5 10 14Z" fill="#8ad8f8"/></svg>
 </div>
</div>

<!-- ============ EXPLORER ============ -->
<div class="a" id="ex" style="left:318px;top:9px;width:904px;height:643px;border-radius:8px;background:#191919;overflow:hidden;border:1px solid #2e2e2e;box-shadow:0 8px 36px rgba(0,0,0,.55)">
 <div class="a" style="left:-319px;top:-10px;width:1366px;height:768px">
  <!-- title bar -->
  <div class="a" style="left:318px;top:9px;width:904px;height:39px;background:#0b0b0b"></div>
  <div class="a" style="left:326px;top:16px;width:240px;height:33px;border-radius:8px 8px 0 0;background:#202020"></div>
  <svg style="left:335px;top:24px" width="17" height="14" viewBox="0 0 17 14"><path d="M0 1.5 Q0 0 1.5 0 H6 L7.5 1.5 H15.5 Q17 1.5 17 3 V12.5 Q17 14 15.5 14 H1.5 Q0 14 0 12.5 Z" fill="#e9a820"/><path d="M0 4 H17 V12.5 Q17 14 15.5 14 H1.5 Q0 14 0 12.5 Z" fill="#ffd65e"/></svg>
  <div class="t" style="left:361px;top:27px;font-size:12px;font-weight:bold;color:#fff;letter-spacing:-0.45px">Estados-Financieros-3trim</div>
  <svg style="left:539px;top:27px" width="10" height="10"><path d="M0.5 0.5 L9.5 9.5 M9.5 0.5 L0.5 9.5" stroke="#e0e0e0" stroke-width="1.2"/></svg>
  <svg style="left:583px;top:27px" width="11" height="11"><path d="M5.5 0 V11 M0 5.5 H11" stroke="#f0f0f0" stroke-width="1.1"/></svg><div class="a" style="left:566px;top:40px;width:8px;height:8px;background:#202020"></div><div class="a" style="left:566px;top:40px;width:8px;height:8px;border-radius:0 0 0 8px;background:#0b0b0b"></div>
  <div class="a" style="left:1103px;top:22px;width:10px;height:1px;background:#fff"></div>
  <div class="a" style="left:1148px;top:17px;width:10px;height:10px;border:1px solid #fff;border-radius:1px"></div>
  <svg style="left:1193px;top:17px" width="11" height="11"><path d="M0.5 0.5 L10.5 10.5 M10.5 0.5 L0.5 10.5" stroke="#fff" stroke-width="1.1"/></svg>
  <!-- nav bar -->
  <div class="a" style="left:318px;top:48px;width:904px;height:47px;background:#202020"></div>
  <svg style="left:338px;top:66px" width="13" height="12"><path d="M12.5 6 H1 M6 0.8 L0.8 6 L6 11.2" stroke="#fff" stroke-width="1.1" fill="none"/></svg>
  <svg style="left:387px;top:66px" width="13" height="12"><path d="M0.5 6 H12 M7 0.8 L12.2 6 L7 11.2" stroke="#7a7a7a" stroke-width="1.1" fill="none"/></svg>
  <svg style="left:434px;top:65px" width="13" height="14"><path d="M6.5 13.5 V1 M1 6.5 L6.5 1 L12 6.5" stroke="#fff" stroke-width="1.1" fill="none"/></svg>
  <svg style="left:482px;top:65px" width="13" height="13"><path d="M11.8 6.5 A5.3 5.3 0 1 1 10 2.5" stroke="#fff" stroke-width="1.1" fill="none"/><path d="M10.5 0.3 V3.2 H7.6" stroke="#fff" stroke-width="1.1" fill="none"/></svg>
  <div class="a" style="left:519px;top:56px;width:489px;height:32px;border-radius:5px;background:#2b2b2b"></div>
  <svg style="left:532px;top:64px" width="16" height="15"><rect x="0.6" y="0.6" width="14.8" height="10.5" rx="2" stroke="#c8c8c8" stroke-width="1.2" fill="none"/><path d="M5 14 H11 M8 11 V14" stroke="#c8c8c8" stroke-width="1.2"/></svg>
  <svg style="left:567px;top:67px" width="6" height="10"><path d="M1 1 L5 5 L1 9" stroke="#d0d0d0" stroke-width="1.1" fill="none"/></svg>
  <div class="a" style="left:593px;top:71px;width:2.5px;height:2.5px;background:#fff;box-shadow:5px 0 0 #fff,10px 0 0 #fff"></div>
  <div class="t" style="left:623px;top:66px;font-size:14px;color:#fff">ANA</div>
  <svg style="left:669px;top:67px" width="6" height="10"><path d="M1 1 L5 5 L1 9" stroke="#d0d0d0" stroke-width="1.1" fill="none"/></svg>
  <div class="t" style="left:693px;top:66px;font-size:14px;color:#fff;letter-spacing:-0.1px">Estados-Financieros-3trim</div>
  <div class="a" style="left:1018px;top:56px;width:220px;height:32px;border-radius:5px;background:#2b2b2b"></div>
  <div class="t" style="left:1032px;top:66px;font-size:14px;color:#cfcfcf;transform:scaleX(0.93);transform-origin:0 0">Buscar en Estados-Financieros-</div>
  <div class="a" style="left:318px;top:95px;width:904px;height:1px;background:#3b3b3b"></div>
  <!-- toolbar -->
  <div class="a" style="left:318px;top:96px;width:904px;height:54px;background:#191919"></div>
  <svg style="left:338px;top:114px" width="17" height="17" viewBox="0 0 17 17"><circle cx="8.5" cy="8.5" r="7.6" stroke="#fff" stroke-width="1.1" fill="none"/><path d="M8.5 4.5 V12.5 M4.5 8.5 H12.5" stroke="#4cc2ff" stroke-width="1.2"/></svg>
  <div class="t" style="left:363px;top:118px;font-size:12px;color:#fff">Nuevo</div>
  <svg style="left:404px;top:121px" width="8" height="5"><path d="M0.5 0.5 L4 4 L7.5 0.5" stroke="#cfcfcf" stroke-width="1" fill="none"/></svg>
  <div class="a" style="left:427px;top:107px;width:1px;height:31px;background:#333"></div>
  <svg style="left:445px;top:114px" width="17" height="18" viewBox="0 0 17 18"><path d="M4 1 L11.5 12 M13 1 L5.5 12" stroke="#575757" stroke-width="1.1"/><circle cx="4.5" cy="14" r="2.8" stroke="#2f5d80" stroke-width="1.1" fill="none"/><circle cx="12.5" cy="14" r="2.8" stroke="#2f5d80" stroke-width="1.1" fill="none"/></svg>
  <svg style="left:494px;top:115px" width="16" height="16" viewBox="0 0 16 16"><rect x="4.5" y="0.5" width="11" height="11" rx="2" stroke="#2f5d80" stroke-width="1.1" fill="none"/><path d="M2.5 3.5 Q0.5 3.8 0.5 6 V13 Q0.5 15.5 3 15.5 H10 Q12.2 15.5 12.5 13.5" stroke="#575757" stroke-width="1.1" fill="none"/></svg>
  <svg style="left:541px;top:113px" width="17" height="19" viewBox="0 0 17 19"><path d="M4 2.5 H2 Q0.5 2.5 0.5 4 V17 Q0.5 18.5 2 18.5 H6" stroke="#575757" stroke-width="1.1" fill="none"/><rect x="4" y="0.5" width="6" height="3.5" rx="1" stroke="#575757" stroke-width="1.1" fill="none"/><path d="M10 2.5 H12 Q13.5 2.5 13.5 4 V6.5" stroke="#575757" stroke-width="1.1" fill="none"/><rect x="7.5" y="7.5" width="9" height="11" rx="1.5" stroke="#2f5d80" stroke-width="1.1" fill="none"/></svg>
  <svg style="left:588px;top:114px" width="19" height="18" viewBox="0 0 19 18"><path d="M7 3.5 H2.5 Q0.5 3.5 0.5 5.5 V12.5 Q0.5 14.5 2.5 14.5 H7 M12 3.5 H16.5 Q18.5 3.5 18.5 5.5 V12.5 Q18.5 14.5 16.5 14.5 H12" stroke="#575757" stroke-width="1.1" fill="none"/><path d="M9.5 0.5 V17.5 M7.5 0.5 H11.5 M7.5 17.5 H11.5" stroke="#2f5d80" stroke-width="1.1"/><path d="M3 12 L5 5.5 L7 12 M3.7 10 H6.3" stroke="#2f5d80" stroke-width="1" fill="none"/></svg>
  <svg style="left:637px;top:114px" width="18" height="17" viewBox="0 0 18 17"><path d="M6 2.5 H3 Q0.5 2.5 0.5 5 V14 Q0.5 16.5 3 16.5 H12 Q14.5 16.5 14.5 14 V12" stroke="#575757" stroke-width="1.1" fill="none"/><path d="M4.5 12 Q5 6 11.5 6 V3 L17 7.8 L11.5 12.5 V9.5 Q7 9.5 4.5 12 Z" stroke="#2f5d80" stroke-width="1.1" fill="#2f5d80" stroke-linejoin="round"/></svg>
  <svg style="left:686px;top:113px" width="15" height="18" viewBox="0 0 15 18"><path d="M0.5 3.5 H14.5 M5 3.5 V1.5 Q5 0.5 6 0.5 H9 Q10 0.5 10 1.5 V3.5 M2 3.5 L3 16 Q3.1 17.5 4.5 17.5 H10.5 Q11.9 17.5 12 16 L13 3.5 M5.5 6.5 V14.5 M9.5 6.5 V14.5" stroke="#575757" stroke-width="1.1" fill="none"/></svg>
  <div class="a" style="left:720px;top:107px;width:1px;height:31px;background:#333"></div>
  <svg style="left:737px;top:115px" width="19" height="16" viewBox="0 0 19 16"><path d="M5 15.5 V1 M0.8 5 L5 0.8 L9.2 5" stroke="#fff" stroke-width="1.1" fill="none"/><path d="M13.5 0.5 V15 M9.3 11 L13.5 15.2 L17.7 11" stroke="#4cc2ff" stroke-width="1.1" fill="none"/></svg>
  <div class="t" style="left:761px;top:118px;font-size:12px;color:#fff">Ordenar</div>
  <svg style="left:810px;top:121px" width="8" height="5"><path d="M0.5 0.5 L4 4 L7.5 0.5" stroke="#cfcfcf" stroke-width="1" fill="none"/></svg>
  <svg style="left:846px;top:117px" width="16" height="12" viewBox="0 0 16 12"><path d="M0 0.5 H16 M0 4 H16 M0 7.5 H16 M0 11 H16" stroke="#fff" stroke-width="1"/></svg>
  <div class="t" style="left:870px;top:118px;font-size:12px;color:#fff">Ver</div>
  <svg style="left:893px;top:121px" width="8" height="5"><path d="M0.5 0.5 L4 4 L7.5 0.5" stroke="#cfcfcf" stroke-width="1" fill="none"/></svg>
  <div class="a" style="left:919px;top:107px;width:1px;height:31px;background:#333"></div>
  <div class="a" style="left:934px;top:122px;width:3px;height:3px;border-radius:50%;background:#fff;box-shadow:6px 0 0 #fff,12px 0 0 #fff"></div>
  <svg style="left:1130px;top:116px" width="16" height="14" viewBox="0 0 16 14"><rect x="0.5" y="0.5" width="15" height="13" rx="2.5" stroke="#fff" stroke-width="1.1" fill="none"/><path d="M9.5 0.5 V13.5" stroke="#4cc2ff" stroke-width="1.1"/><path d="M11.3 4 H13.5 M11.3 6.5 H13.5 M11.3 9 H13.5" stroke="#4cc2ff" stroke-width="1"/></svg>
  <div class="t" style="left:1154px;top:118px;font-size:12px;color:#fff">Detalles</div>
  <div class="a" style="left:318px;top:150px;width:904px;height:1px;background:#333"></div>
  <!-- nav pane -->
<div class="a" style="left:321px;top:157px;width:136px;height:32px;border-radius:4px;background:#2d2d2d"></div>
<svg style="left:352px;top:165px" width="16" height="15" viewBox="0 0 16 15"><path d="M2.5 7 V14 H6 V10 H10 V14 H13.5 V7 L8 2.5 Z" fill="#c9c9c9"/><path d="M0.8 8 L8 1.5 L15.2 8" stroke="#f7894a" stroke-width="2.2" fill="none" stroke-linejoin="round"/></svg><div class="t" style="left:373px;width:83px;overflow:hidden;top:167px;font-size:12px;color:#fff">Inicio</div>
<svg style="left:352px;top:196px" width="16" height="16" viewBox="0 0 16 16"><rect x="2.5" y="2.5" width="13" height="13" rx="1.5" fill="#3a8ee0"/><rect x="0.5" y="0.5" width="13" height="13" rx="1.5" fill="#1d8fe8"/><path d="M0.5 12 L6 6.5 L11 11 L13.5 9 V13.5 H0.5 Z" fill="#e8f4fd"/><circle cx="9.5" cy="4" r="1.2" fill="#fff"/></svg><div class="t" style="left:373px;width:83px;overflow:hidden;top:199px;font-size:12px;color:#fff">Galería</div>
<svg style="left:332px;top:233px" width="6" height="9"><path d="M1 0.5 L5 4.5 L1 8.5" stroke="#9d9d9d" stroke-width="1.2" fill="none"/></svg>
<svg style="left:352px;top:230px" width="16" height="11" viewBox="0 0 16 11"><path d="M3.5 10.5 A3 3 0 0 1 3.2 4.6 A4.5 4.5 0 0 1 11.5 3.5 A3.5 3.5 0 0 1 12.5 10.5 Z" fill="#1a7fd8"/><path d="M2 9 Q6 6 15.5 9 Q15 10.5 12.5 10.5 H3.5 Q2.5 10.5 2 9Z" fill="#37a8f0"/></svg><div class="t" style="left:373px;width:83px;overflow:hidden;top:231px;font-size:12px;color:#fff">OneDrive - Personal</div>
<div class="a" style="left:329px;top:269px;width:124px;height:1px;background:#3a3a3a"></div>
<svg style="left:352px;top:294px" width="16" height="12" viewBox="0 0 16 12"><defs><linearGradient id="gd" x1="0" y1="0" x2="0" y2="1"><stop offset="0" stop-color="#4fd2f5"/><stop offset="1" stop-color="#0e86d4"/></linearGradient></defs><rect x="0" y="0" width="16" height="11.5" rx="1.5" fill="url(#gd)"/><rect x="2" y="2" width="2" height="1.6" fill="#fff"/><rect x="2" y="5" width="2" height="1.6" fill="#fff"/></svg><div class="t" style="left:373px;width:83px;overflow:hidden;top:295px;font-size:12px;color:#fff">Escritorio</div>
<svg style="left:443px;top:295px" width="11" height="11" viewBox="0 0 11 11"><path d="M6.5 0.8 L10.2 4.5 L8.8 5 L6.8 7 L6.8 9 L2 4.2 L4 4.2 L6 2.2 Z" fill="#9aa0a6"/><path d="M3.5 7.5 L0.8 10.2" stroke="#9aa0a6" stroke-width="1.3"/></svg>
<svg style="left:354px;top:324px" width="12" height="16" viewBox="0 0 12 16"><path d="M6 0.5 V11 M1.5 6.8 L6 11.2 L10.5 6.8" stroke="#1fbf9a" stroke-width="1.5" fill="none"/><rect x="0" y="13.5" width="12" height="1.8" fill="#1fbf9a"/></svg><div class="t" style="left:373px;width:83px;overflow:hidden;top:327px;font-size:12px;color:#fff">Descargas</div>
<svg style="left:443px;top:327px" width="11" height="11" viewBox="0 0 11 11"><path d="M6.5 0.8 L10.2 4.5 L8.8 5 L6.8 7 L6.8 9 L2 4.2 L4 4.2 L6 2.2 Z" fill="#9aa0a6"/><path d="M3.5 7.5 L0.8 10.2" stroke="#9aa0a6" stroke-width="1.3"/></svg>
<svg style="left:354px;top:356px" width="12" height="16" viewBox="0 0 12 16"><defs><linearGradient id="gdoc" x1="0" y1="0" x2="0" y2="1"><stop offset="0" stop-color="#c5d5e8"/><stop offset="1" stop-color="#7f98b5"/></linearGradient></defs><rect x="0" y="0" width="12" height="16" rx="1" fill="url(#gdoc)"/><path d="M2.5 4 H6 M2.5 6.5 H9.5 M2.5 9 H9.5 M2.5 11.5 H9.5" stroke="#fff" stroke-width="1"/></svg><div class="t" style="left:373px;width:83px;overflow:hidden;top:359px;font-size:12px;color:#fff">Documentos</div>
<svg style="left:443px;top:359px" width="11" height="11" viewBox="0 0 11 11"><path d="M6.5 0.8 L10.2 4.5 L8.8 5 L6.8 7 L6.8 9 L2 4.2 L4 4.2 L6 2.2 Z" fill="#9aa0a6"/><path d="M3.5 7.5 L0.8 10.2" stroke="#9aa0a6" stroke-width="1.3"/></svg>
<svg style="left:353px;top:389px" width="14" height="14" viewBox="0 0 14 14"><rect x="0" y="0" width="14" height="14" rx="1.5" fill="#1e8fe6"/><path d="M0 11 L5 6 L9.5 10 L14 7 V14 H0 Z" fill="#e6f3fd"/><circle cx="10" cy="3.5" r="1.3" fill="#fff"/></svg><div class="t" style="left:373px;width:83px;overflow:hidden;top:391px;font-size:12px;color:#fff">Imágenes</div>
<svg style="left:443px;top:391px" width="11" height="11" viewBox="0 0 11 11"><path d="M6.5 0.8 L10.2 4.5 L8.8 5 L6.8 7 L6.8 9 L2 4.2 L4 4.2 L6 2.2 Z" fill="#9aa0a6"/><path d="M3.5 7.5 L0.8 10.2" stroke="#9aa0a6" stroke-width="1.3"/></svg>
<svg style="left:352px;top:420px" width="16" height="16" viewBox="0 0 16 16"><defs><linearGradient id="gm" x1="0" y1="0" x2="1" y2="1"><stop offset="0" stop-color="#f08a7a"/><stop offset="1" stop-color="#b2539e"/></linearGradient></defs><circle cx="8" cy="8" r="8" fill="url(#gm)"/><path d="M8.5 3.5 V10.5" stroke="#fff" stroke-width="1.3"/><circle cx="7" cy="10.8" r="1.8" fill="#fff"/><path d="M8.5 3.5 L11 5" stroke="#fff" stroke-width="1.3"/></svg><div class="t" style="left:373px;width:83px;overflow:hidden;top:423px;font-size:12px;color:#fff">Música</div>
<svg style="left:443px;top:423px" width="11" height="11" viewBox="0 0 11 11"><path d="M6.5 0.8 L10.2 4.5 L8.8 5 L6.8 7 L6.8 9 L2 4.2 L4 4.2 L6 2.2 Z" fill="#9aa0a6"/><path d="M3.5 7.5 L0.8 10.2" stroke="#9aa0a6" stroke-width="1.3"/></svg>
<svg style="left:352px;top:452px" width="16" height="16" viewBox="0 0 16 16"><rect x="0" y="0" width="16" height="16" rx="2" fill="#8d4fd8"/><rect x="0" y="0" width="2.5" height="16" fill="#6a33b8"/><rect x="13.5" y="0" width="2.5" height="16" fill="#6a33b8"/><path d="M6 4.5 L11.5 8 L6 11.5 Z" fill="#fff"/></svg><div class="t" style="left:373px;width:83px;overflow:hidden;top:455px;font-size:12px;color:#fff">Vídeos</div>
<svg style="left:443px;top:455px" width="11" height="11" viewBox="0 0 11 11"><path d="M6.5 0.8 L10.2 4.5 L8.8 5 L6.8 7 L6.8 9 L2 4.2 L4 4.2 L6 2.2 Z" fill="#9aa0a6"/><path d="M3.5 7.5 L0.8 10.2" stroke="#9aa0a6" stroke-width="1.3"/></svg>
<svg style="left:352px;top:484px" width="17" height="16" viewBox="0 0 17 16"><path d="M0.5 2.5 Q0.5 1.5 1.5 1.5 H6 L7.5 3 H15.5 Q16.5 3 16.5 4 V13.5 Q16.5 14.5 15.5 14.5 H1.5 Q0.5 14.5 0.5 13.5 Z" fill="#e8a317"/><path d="M0.5 5 H16.5 V13.5 Q16.5 14.5 15.5 14.5 H1.5 Q0.5 14.5 0.5 13.5 Z" fill="#ffd35c"/><circle cx="4" cy="12" r="3.6" fill="#1a8a3a"/><path d="M2.3 12 L3.6 13.3 L5.8 10.8" stroke="#fff" stroke-width="1" fill="none"/></svg><div class="t" style="left:373px;width:83px;overflow:hidden;top:487px;font-size:12px;color:#fff;transform:scaleX(0.9);transform-origin:0 0">INFORMES</div>
<svg style="left:443px;top:487px" width="11" height="11" viewBox="0 0 11 11"><path d="M6.5 0.8 L10.2 4.5 L8.8 5 L6.8 7 L6.8 9 L2 4.2 L4 4.2 L6 2.2 Z" fill="#9aa0a6"/><path d="M3.5 7.5 L0.8 10.2" stroke="#9aa0a6" stroke-width="1.3"/></svg>
<svg style="left:352px;top:516px" width="17" height="16" viewBox="0 0 17 16"><path d="M0.5 2.5 Q0.5 1.5 1.5 1.5 H6 L7.5 3 H15.5 Q16.5 3 16.5 4 V13.5 Q16.5 14.5 15.5 14.5 H1.5 Q0.5 14.5 0.5 13.5 Z" fill="#e8a317"/><path d="M0.5 5 H16.5 V13.5 Q16.5 14.5 15.5 14.5 H1.5 Q0.5 14.5 0.5 13.5 Z" fill="#ffd35c"/><circle cx="4" cy="12" r="3.6" fill="#1a8a3a"/><path d="M2.3 12 L3.6 13.3 L5.8 10.8" stroke="#fff" stroke-width="1" fill="none"/></svg><div class="t" style="left:373px;width:83px;overflow:hidden;top:519px;font-size:12px;color:#fff">PAC</div>
<svg style="left:352px;top:548px" width="17" height="16" viewBox="0 0 17 16"><path d="M0.5 2.5 Q0.5 1.5 1.5 1.5 H6 L7.5 3 H15.5 Q16.5 3 16.5 4 V13.5 Q16.5 14.5 15.5 14.5 H1.5 Q0.5 14.5 0.5 13.5 Z" fill="#e8a317"/><path d="M0.5 5 H16.5 V13.5 Q16.5 14.5 15.5 14.5 H1.5 Q0.5 14.5 0.5 13.5 Z" fill="#ffd35c"/></svg><div class="t" style="left:373px;width:83px;overflow:hidden;top:551px;font-size:12px;color:#fff">ANA</div>
<svg style="left:352px;top:580px" width="17" height="16" viewBox="0 0 17 16"><path d="M0.5 2.5 Q0.5 1.5 1.5 1.5 H6 L7.5 3 H15.5 Q16.5 3 16.5 4 V13.5 Q16.5 14.5 15.5 14.5 H1.5 Q0.5 14.5 0.5 13.5 Z" fill="#e8a317"/><path d="M0.5 5 H16.5 V13.5 Q16.5 14.5 15.5 14.5 H1.5 Q0.5 14.5 0.5 13.5 Z" fill="#ffd35c"/></svg><div class="t" style="left:373px;width:83px;overflow:hidden;top:583px;font-size:12px;color:#fff">Estados-Financieros-3trim</div>
<div class="a" style="left:328px;top:620px;width:121px;height:1px;background:#3a3a3a"></div>

  <div class="a" style="left:465px;top:168px;width:2px;height:144px;border-radius:1px;background:#8a8a8a"></div>
  <div class="a" style="left:476px;top:151px;width:1px;height:477px;background:#2a2a2a"></div>
  <!-- column header -->
  <div class="t" style="left:508px;top:158px;font-size:12px;color:#fff">Nombre</div>
  <svg style="left:621px;top:149px" width="9" height="5"><path d="M0.5 4.5 L4.5 0.5 L8.5 4.5" stroke="#bdbdbd" stroke-width="1" fill="none"/></svg>
  <div class="a" style="left:749px;top:151px;width:1px;height:25px;background:#3a3a3a"></div>
  <div class="t" style="left:756px;top:159px;font-size:12px;color:#fff">Fecha de modificación</div>
  <div class="a" style="left:893px;top:151px;width:1px;height:25px;background:#3a3a3a"></div>
  <div class="t" style="left:900px;top:159px;font-size:12px;color:#fff">Tipo</div>
  <div class="a" style="left:1013px;top:151px;width:1px;height:25px;background:#3a3a3a"></div>
  <div class="t" style="left:1020px;top:158px;font-size:12px;color:#fff">Tamaño</div>
  <div class="a" style="left:1093px;top:151px;width:1px;height:25px;background:#3a3a3a"></div>
<div class="a" style="left:492px;top:294px;width:598px;height:24px;border-radius:2px;background:#4f4f4f"></div>
<svg style="left:497px;top:186px" width="14" height="16" viewBox="0 0 14 16"><path d="M1.5 0 H9.5 L14 4.5 V14.5 Q14 16 12.5 16 H1.5 Q0 16 0 14.5 V1.5 Q0 0 1.5 0 Z" fill="#3d86e8"/><path d="M9.5 0 V3.2 Q9.5 4.5 10.8 4.5 H14 Z" fill="#a9c9f5"/><path d="M4 6 H9.5 V9 H7 V12 H4 Z" fill="#fff"/></svg>
<div class="t" style="left:516px;top:189px;font-size:12px;color:#fff">Balance-3trim-signed-signed</div>
<div class="t" style="left:756px;top:189px;font-size:12px;color:#fff;transform:scaleX(0.96);transform-origin:0 0">11/11/2024 10:24</div>
<div class="t" style="left:900px;top:189px;font-size:12px;color:#fff;transform:scaleX(0.96);transform-origin:0 0">Archivo PDF</div>
<div class="t" style="left:1000px;top:189px;width:86px;text-align:right;font-size:12px;color:#fff;transform:scaleX(0.88);transform-origin:100% 0">968 KB</div>
<svg style="left:497px;top:214px" width="14" height="16" viewBox="0 0 14 16"><path d="M1.5 0 H9.5 L14 4.5 V14.5 Q14 16 12.5 16 H1.5 Q0 16 0 14.5 V1.5 Q0 0 1.5 0 Z" fill="#3d86e8"/><path d="M9.5 0 V3.2 Q9.5 4.5 10.8 4.5 H14 Z" fill="#a9c9f5"/><path d="M4 6 H9.5 V9 H7 V12 H4 Z" fill="#fff"/></svg>
<div class="t" style="left:516px;top:217px;font-size:12px;color:#fff;transform:scaleX(0.871);transform-origin:0 0">CEDULA PRESUPUESTARIA GASTOS-3TRI...</div>
<div class="t" style="left:756px;top:217px;font-size:12px;color:#fff;transform:scaleX(0.96);transform-origin:0 0">11/11/2024 10:33</div>
<div class="t" style="left:900px;top:217px;font-size:12px;color:#fff;transform:scaleX(0.96);transform-origin:0 0">Archivo PDF</div>
<div class="t" style="left:1000px;top:217px;width:86px;text-align:right;font-size:12px;color:#fff;transform:scaleX(0.88);transform-origin:100% 0">725 KB</div>
<svg style="left:497px;top:242px" width="14" height="16" viewBox="0 0 14 16"><path d="M1.5 0 H9.5 L14 4.5 V14.5 Q14 16 12.5 16 H1.5 Q0 16 0 14.5 V1.5 Q0 0 1.5 0 Z" fill="#3d86e8"/><path d="M9.5 0 V3.2 Q9.5 4.5 10.8 4.5 H14 Z" fill="#a9c9f5"/><path d="M4 6 H9.5 V9 H7 V12 H4 Z" fill="#fff"/></svg>
<div class="t" style="left:516px;top:245px;font-size:12px;color:#fff;transform:scaleX(0.875);transform-origin:0 0">CEDULA PRESUPUESTARIA INGRESO-3TRI...</div>
<div class="t" style="left:756px;top:245px;font-size:12px;color:#fff;transform:scaleX(0.96);transform-origin:0 0">11/11/2024 10:32</div>
<div class="t" style="left:900px;top:245px;font-size:12px;color:#fff;transform:scaleX(0.96);transform-origin:0 0">Archivo PDF</div>
<div class="t" style="left:1000px;top:245px;width:86px;text-align:right;font-size:12px;color:#fff;transform:scaleX(0.88);transform-origin:100% 0">249 KB</div>
<svg style="left:497px;top:270px" width="14" height="16" viewBox="0 0 14 16"><path d="M1.5 0 H9.5 L14 4.5 V14.5 Q14 16 12.5 16 H1.5 Q0 16 0 14.5 V1.5 Q0 0 1.5 0 Z" fill="#3d86e8"/><path d="M9.5 0 V3.2 Q9.5 4.5 10.8 4.5 H14 Z" fill="#a9c9f5"/><path d="M4 6 H9.5 V9 H7 V12 H4 Z" fill="#fff"/></svg>
<div class="t" style="left:516px;top:273px;font-size:12px;color:#fff;transform:scaleX(0.947);transform-origin:0 0">Estado de Ejecución Presupuestario-3TRI...</div>
<div class="t" style="left:756px;top:273px;font-size:12px;color:#fff;transform:scaleX(0.96);transform-origin:0 0">11/11/2024 10:31</div>
<div class="t" style="left:900px;top:273px;font-size:12px;color:#fff;transform:scaleX(0.96);transform-origin:0 0">Archivo PDF</div>
<div class="t" style="left:1000px;top:273px;width:86px;text-align:right;font-size:12px;color:#fff;transform:scaleX(0.88);transform-origin:100% 0">233 KB</div>
<svg style="left:497px;top:298px" width="14" height="16" viewBox="0 0 14 16"><path d="M1.5 0 H9.5 L14 4.5 V14.5 Q14 16 12.5 16 H1.5 Q0 16 0 14.5 V1.5 Q0 0 1.5 0 Z" fill="#3d86e8"/><path d="M9.5 0 V3.2 Q9.5 4.5 10.8 4.5 H14 Z" fill="#a9c9f5"/><path d="M4 6 H9.5 V9 H7 V12 H4 Z" fill="#fff"/></svg>
<div class="t" style="left:516px;top:301px;font-size:12px;color:#fff;transform:scaleX(0.986);transform-origin:0 0">Estado de Flujo del Efectivo-3trim-signed...</div>
<div class="t" style="left:756px;top:301px;font-size:12px;color:#fff;transform:scaleX(0.96);transform-origin:0 0">11/11/2024 10:26</div>
<div class="t" style="left:900px;top:301px;font-size:12px;color:#fff;transform:scaleX(0.96);transform-origin:0 0">Archivo PDF</div>
<div class="t" style="left:1000px;top:301px;width:86px;text-align:right;font-size:12px;color:#fff;transform:scaleX(0.88);transform-origin:100% 0">222 KB</div>
<svg style="left:497px;top:326px" width="14" height="16" viewBox="0 0 14 16"><path d="M1.5 0 H9.5 L14 4.5 V14.5 Q14 16 12.5 16 H1.5 Q0 16 0 14.5 V1.5 Q0 0 1.5 0 Z" fill="#3d86e8"/><path d="M9.5 0 V3.2 Q9.5 4.5 10.8 4.5 H14 Z" fill="#a9c9f5"/><path d="M4 6 H9.5 V9 H7 V12 H4 Z" fill="#fff"/></svg>
<div class="t" style="left:516px;top:329px;font-size:12px;color:#fff;transform:scaleX(0.901);transform-origin:0 0">ESTADO DE RENDIMIENTO FINANCIERO-...</div>
<div class="t" style="left:756px;top:329px;font-size:12px;color:#fff;transform:scaleX(0.96);transform-origin:0 0">11/11/2024 10:33</div>
<div class="t" style="left:900px;top:329px;font-size:12px;color:#fff;transform:scaleX(0.96);transform-origin:0 0">Archivo PDF</div>
<div class="t" style="left:1000px;top:329px;width:86px;text-align:right;font-size:12px;color:#fff;transform:scaleX(0.88);transform-origin:100% 0">213 KB</div>
<svg style="left:497px;top:354px" width="14" height="16" viewBox="0 0 14 16"><path d="M1.5 0 H9.5 L14 4.5 V14.5 Q14 16 12.5 16 H1.5 Q0 16 0 14.5 V1.5 Q0 0 1.5 0 Z" fill="#3d86e8"/><path d="M9.5 0 V3.2 Q9.5 4.5 10.8 4.5 H14 Z" fill="#a9c9f5"/><path d="M4 6 H9.5 V9 H7 V12 H4 Z" fill="#fff"/></svg>
<div class="t" style="left:516px;top:357px;font-size:12px;color:#fff;transform:scaleX(0.913);transform-origin:0 0">ESTADO DE SITUACION FINANCIERA-3tri...</div>
<div class="t" style="left:756px;top:357px;font-size:12px;color:#fff;transform:scaleX(0.96);transform-origin:0 0">11/11/2024 10:29</div>
<div class="t" style="left:900px;top:357px;font-size:12px;color:#fff;transform:scaleX(0.96);transform-origin:0 0">Archivo PDF</div>
<div class="t" style="left:1000px;top:357px;width:86px;text-align:right;font-size:12px;color:#fff;transform:scaleX(0.88);transform-origin:100% 0">334 KB</div>

  <!-- status bar -->
  <div class="t" style="left:332px;top:635px;font-size:12px;color:#fff">7 elementos</div>
  <div class="a" style="left:405px;top:634px;width:1px;height:13px;background:#fff"></div>
  <div class="a" style="left:1174px;top:630px;width:22px;height:22px;border-radius:3px;background:#3a3a3a"></div>
  <svg style="left:1177px;top:633px" width="16" height="16" viewBox="0 0 16 16"><rect x="0.5" y="0.5" width="15" height="15" rx="2" fill="#e0e0e0" stroke="#7a7a7a"/><path d="M3 4 H13 M3 6.5 H13 M3 9 H13 M3 11.5 H13" stroke="#333" stroke-width="1"/></svg>
  <svg style="left:1199px;top:633px" width="16" height="16" viewBox="0 0 16 16"><rect x="0.5" y="0.5" width="15" height="15" rx="2" fill="#e8e8e8" stroke="#7a7a7a"/><rect x="2.5" y="2.5" width="11" height="8.5" fill="#fff" stroke="#333" stroke-width="1"/></svg>
 </div>
</div>

</body></html>
